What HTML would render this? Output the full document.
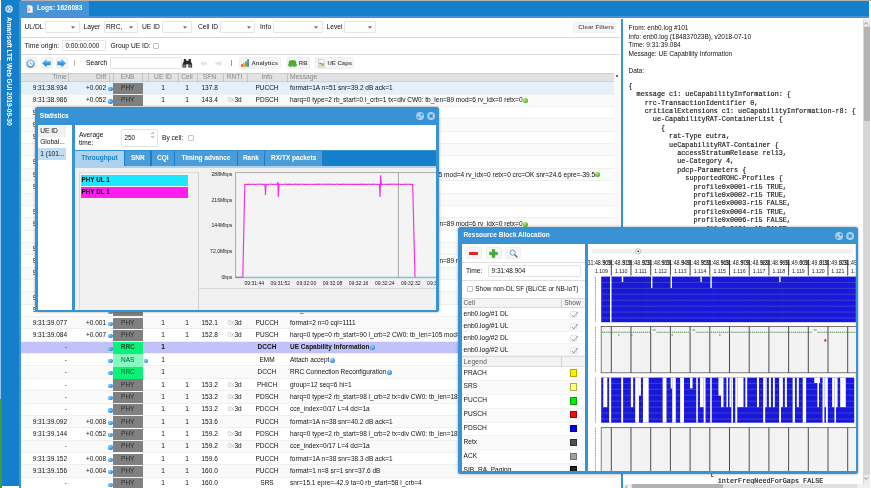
<!DOCTYPE html><html><head><meta charset="utf-8"><title>Amarisoft LTE Web GUI</title><style>
*{box-sizing:border-box;margin:0;padding:0}
html,body{width:871px;height:488px;overflow:hidden;background:#fff}
body{position:relative;font-family:"Liberation Sans",sans-serif;font-size:6.5px;color:#111;line-height:1}
.a{position:absolute}
.t{position:absolute;white-space:nowrap}
.b{font-weight:bold}
.sel{position:absolute;background:#fff;border:0.6px solid #e4e4e4;border-radius:1.2px}
.btn{position:absolute;background:#f5f5f5;border:0.5px solid #f0f0f0;border-radius:1.8px}
.row{position:absolute;left:21px;width:593px;height:12.33px;border-bottom:0.6px solid #f0f0f0}
.row .t{top:2.7px;font-size:6.5px}
.hd{position:absolute;top:0;height:100%;border-right:0.6px solid #c8c8c8}
.phy{position:absolute;left:92.4px;width:29.3px;top:0.5px;height:11.2px;background:#808080}
.rrc{position:absolute;left:92.4px;width:29.3px;top:0;height:12.4px;background:#0cf278}
.nas{position:absolute;left:92.4px;width:29.3px;top:0;height:12.4px;background:#84fbc0}
.ball{position:absolute;width:4.2px;height:4.2px;border-radius:50%;background:radial-gradient(circle at 35% 35%,#8fd0ff,#2a86d8 70%)}
.gr{display:inline-block;width:5px;height:5px;border-radius:50%;background:radial-gradient(circle at 40% 35%,#b8f080,#4caf20 70%);vertical-align:-0.8px;margin-left:0.3px}
.inf{display:inline-block;width:5px;height:5px;border-radius:50%;background:radial-gradient(circle at 40% 35%,#9fd4ff,#2a86d8 75%);vertical-align:-0.8px;margin-left:0.5px}
.win{position:absolute;background:#3892d4;border-radius:2.5px}
.mono{font-family:"Liberation Mono",monospace;white-space:pre;-webkit-text-stroke:0.18px #222}
.cb{position:absolute;width:6px;height:6px;border:0.6px solid #c4c4c4;background:#fff;border-radius:1px}
.rx{color:#c0c0c0}
</style></head><body><div id="app" style="position:absolute;left:0;top:0;width:871px;height:488px;overflow:hidden;will-change:transform">
<div class="a" style="left:19px;top:0;width:852px;height:1.3px;background:#b4b4b4"></div>
<div class="a" style="left:1.2px;top:0;width:20px;height:486px;background:#157fcc"></div>
<div class="a" style="left:18.5px;top:1.3px;width:2.5px;height:488px;background:#3e94d6"></div>
<div class="a" style="left:0;top:60px;width:1.4px;height:339px;background:#9cc6e8"></div>
<div class="a" style="left:0;top:399px;width:1.6px;height:89px;background:#3f9a3c"></div>
<div class="a" style="left:21px;top:1.3px;width:848px;height:14.4px;background:#157fcc"></div>
<div class="a" style="left:21px;top:15.5px;width:848px;height:2.8px;background:#4595d6"></div>
<div class="a" style="left:21px;top:1.3px;width:67.5px;height:15px;background:#4595d6"></div>
<svg class="a" style="left:27px;top:4.5px" width="6" height="8" viewBox="0 0 6 8"><path d="M0.3 0.3h3.6l1.8 1.8v5.6H0.3z" fill="#f4f4f4" stroke="#c9c9c9" stroke-width="0.5"/><path d="M1 3h1.6M1 4.3h2.4M1 5.6h2" stroke="#e08080" stroke-width="0.7"/></svg>
<div class="t b" style="left:37px;top:4.6px;font-size:6.6px;color:#fff">Logs: 1626083</div>
<svg class="a" style="left:5.2px;top:5px" width="8" height="8" viewBox="0 0 8 8"><circle cx="4" cy="4" r="3.1" fill="#5aa5dd" stroke="#d4e8f7" stroke-width="1.3"/><path d="M3.2 2.4L5 4 3.2 5.6" fill="none" stroke="#eaf4fb" stroke-width="1.1"/></svg>
<div class="t b" style="left:12.1px;top:17.2px;font-size:6.55px;color:#fff;transform-origin:0 0;transform:rotate(90deg)">Amarisoft LTE Web GUI 2019-09-30</div>
<div class="a" style="left:21px;top:36.6px;width:599px;height:0.7px;background:#d9d9d9"></div>
<div class="a" style="left:21px;top:54.2px;width:599px;height:0.7px;background:#d9d9d9"></div>
<div class="t" style="left:24.5px;top:24px;font-size:6.7px;">UL/DL</div>
<div class="sel" style="left:45px;top:21px;width:34.5px;height:12.2px"></div>
<svg class="a" style="left:71.3px;top:26.2px" width="4" height="3" viewBox="0 0 4 3"><path d="M0.2 0.5L2 2.5 3.8 0.5z" fill="#666" stroke="#666" stroke-width="0.3" stroke-linejoin="round"/></svg>
<div class="t" style="left:83.5px;top:24px;font-size:6.7px;">Layer</div>
<div class="sel" style="left:103.5px;top:21px;width:34px;height:12.2px"></div>
<div class="t" style="left:106.0px;top:24px;font-size:6.7px">RRC,</div>
<svg class="a" style="left:129.3px;top:26.2px" width="4" height="3" viewBox="0 0 4 3"><path d="M0.2 0.5L2 2.5 3.8 0.5z" fill="#666" stroke="#666" stroke-width="0.3" stroke-linejoin="round"/></svg>
<div class="t" style="left:142px;top:24px;font-size:6.7px;">UE ID</div>
<div class="sel" style="left:161.5px;top:21px;width:30px;height:12.2px"></div>
<svg class="a" style="left:183.3px;top:26.2px" width="4" height="3" viewBox="0 0 4 3"><path d="M0.2 0.5L2 2.5 3.8 0.5z" fill="#666" stroke="#666" stroke-width="0.3" stroke-linejoin="round"/></svg>
<div class="t" style="left:198px;top:24px;font-size:6.7px;">Cell ID</div>
<div class="sel" style="left:220px;top:21px;width:35px;height:12.2px"></div>
<svg class="a" style="left:246.8px;top:26.2px" width="4" height="3" viewBox="0 0 4 3"><path d="M0.2 0.5L2 2.5 3.8 0.5z" fill="#666" stroke="#666" stroke-width="0.3" stroke-linejoin="round"/></svg>
<div class="t" style="left:260px;top:24px;font-size:6.7px;">Info</div>
<div class="sel" style="left:273px;top:21px;width:49.5px;height:12.2px"></div>
<svg class="a" style="left:314.3px;top:26.2px" width="4" height="3" viewBox="0 0 4 3"><path d="M0.2 0.5L2 2.5 3.8 0.5z" fill="#666" stroke="#666" stroke-width="0.3" stroke-linejoin="round"/></svg>
<div class="t" style="left:326.5px;top:24px;font-size:6.7px;">Level</div>
<div class="sel" style="left:343.5px;top:21px;width:32.5px;height:12.2px"></div>
<svg class="a" style="left:367.8px;top:26.2px" width="4" height="3" viewBox="0 0 4 3"><path d="M0.2 0.5L2 2.5 3.8 0.5z" fill="#666" stroke="#666" stroke-width="0.3" stroke-linejoin="round"/></svg>
<div class="btn" style="left:573.3px;top:22px;width:43.2px;height:11px"></div>
<div class="t b" style="left:578.3px;top:24.4px;font-size:6.2px;color:#666">Clear Filters</div>
<div class="t" style="left:24.5px;top:42.6px;font-size:6.7px;">Time origin:</div>
<div class="sel" style="left:62px;top:39.8px;width:44.3px;height:11.4px"></div>
<div class="t" style="left:65.5px;top:42.8px;font-size:6.4px;">0:00:00.000</div>
<div class="t" style="left:110.5px;top:42.6px;font-size:6.7px;">Group UE ID:</div>
<div class="cb" style="left:152.7px;top:43px"></div>
<div class="btn" style="left:25px;top:57.3px;width:12px;height:12px;border-color:#f1eeec;background:#f6f5f4"></div>
<div class="btn" style="left:40.5px;top:57.3px;width:12px;height:12px;border-color:#f1eeec;background:#f6f5f4"></div>
<div class="btn" style="left:56px;top:57.3px;width:12px;height:12px;border-color:#f1eeec;background:#f6f5f4"></div>
<svg class="a" style="left:26.4px;top:58.7px" width="9.2" height="9.2" viewBox="0 0 10 10"><defs><linearGradient id="cg" x1="0" y1="0" x2="0" y2="1"><stop offset="0" stop-color="#9ad0f4"/><stop offset="1" stop-color="#2f8cd8"/></linearGradient></defs><circle cx="5" cy="5" r="3.8" fill="#f7fbff" stroke="url(#cg)" stroke-width="1.7"/><path d="M5.2 5.2L4.2 3.2M5.2 5.2l1.8 0.4" stroke="#e0703a" stroke-width="0.8" fill="none"/></svg>
<svg class="a" style="left:42.2px;top:59.2px" width="9" height="8.4" viewBox="0 0 9 8"><defs><linearGradient id="ag" x1="0" y1="0" x2="0" y2="1"><stop offset="0" stop-color="#7fd0ff"/><stop offset="0.5" stop-color="#2fa0ef"/><stop offset="1" stop-color="#1a78d0"/></linearGradient></defs><path d="M0.3 4L4.4 0.3v1.9h4.2v3.6H4.4v1.9z" fill="url(#ag)" stroke="#2a86d6" stroke-width="0.3"/></svg>
<svg class="a" style="left:57.4px;top:59.2px" width="9" height="8.4" viewBox="0 0 9 8"><path d="M8.7 4L4.6 0.3v1.9H0.4v3.6h4.2v1.9z" fill="url(#ag)" stroke="#2a86d6" stroke-width="0.3"/></svg>
<div class="a" style="left:74.3px;top:60.4px;width:1px;height:6px;background:#b4b4b4"></div>
<div class="t" style="left:86px;top:60px;font-size:6.7px;">Search</div>
<div class="sel" style="left:109.5px;top:57.3px;width:72px;height:12.2px"></div>
<svg class="a" style="left:182.2px;top:58.2px" width="10.6" height="10.4" viewBox="0 0 11 11"><path d="M1.8 1h2.4v2H6.8V1h2.4v2.4l1.4 3.2V10H6.6V6.6H4.4V10H0.4V6.6l1.4-3.2z" fill="#2a2a2a"/><rect x="1.2" y="7" width="2.4" height="2.2" fill="#8a8a8a"/><rect x="7.4" y="7" width="2.4" height="2.2" fill="#8a8a8a"/></svg>
<svg class="a" style="left:199.5px;top:60px" width="7.5" height="7" viewBox="0 0 9 8"><path d="M0.3 4L4.2 0.4v2.2h4.3v2.8H4.2v2.2z" fill="#d3e6f6"/></svg>
<svg class="a" style="left:214.5px;top:60px" width="7.5" height="7" viewBox="0 0 9 8"><path d="M8.7 4L4.8 0.4v2.2H0.5v2.8h4.3v2.2z" fill="#d3e6f6"/></svg>
<div class="a" style="left:231px;top:60.4px;width:1px;height:6px;background:#9a9a9a"></div>
<div class="btn" style="left:238.8px;top:57.3px;width:42px;height:12px"></div>
<svg class="a" style="left:241px;top:59.3px" width="8.4" height="8" viewBox="0 0 8.4 8"><rect x="0.2" y="5.2" width="1.7" height="2.6" fill="#e03c31"/><rect x="2.2" y="3.8" width="1.7" height="4" fill="#f0a020"/><rect x="4.2" y="2.2" width="1.7" height="5.6" fill="#58b030"/><rect x="6.2" y="0.3" width="1.7" height="7.5" fill="#3a78d0"/></svg>
<div class="t b" style="left:251.4px;top:60.2px;font-size:6px;color:#555">Analytics</div>
<div class="btn" style="left:285.8px;top:57.3px;width:24.4px;height:12px"></div>
<svg class="a" style="left:287.6px;top:60.2px" width="9" height="7" viewBox="0 0 9 7"><path d="M1 2.2Q1 0.4 2.8 0.4H6.2Q8 0.4 8 2.2V4.4H8.8V5.8H7V6.8H5.6V5.8H3.4V6.8H2V5.8H0.2V4.4H1z" fill="#4caf30" stroke="#2f8a1e" stroke-width="0.4"/></svg>
<div class="t b" style="left:298.8px;top:60.2px;font-size:6px;color:#555">RB</div>
<div class="btn" style="left:314.6px;top:57.3px;width:39px;height:12px"></div>
<svg class="a" style="left:317.5px;top:59px" width="7.2" height="8.6" viewBox="0 0 7.2 8.6"><path d="M0.4 0.4h4.2l2.2 2.2v5.6H0.4z" fill="#fafafa" stroke="#9ab4d0" stroke-width="0.6"/><rect x="1.4" y="3.6" width="1.6" height="1.4" fill="#4a90e0"/><rect x="3.4" y="4.2" width="2.2" height="2.6" fill="#60b840"/><rect x="1.4" y="5.6" width="1.4" height="1.4" fill="#f0a030"/></svg>
<div class="t b" style="left:327.5px;top:60.2px;font-size:6px;color:#555">UE Caps</div>
<div class="a" style="left:21px;top:72.6px;width:593px;height:9.7px;background:#e2e2e2;border-top:0.6px solid #cfcfcf;border-bottom:0.6px solid #cfcfcf"></div>
<div class="a" style="left:68px;top:73.2px;width:0.6px;height:8.6px;background:#c4c4c4"></div>
<div class="a" style="left:109px;top:73.2px;width:0.6px;height:8.6px;background:#c4c4c4"></div>
<div class="a" style="left:113px;top:73.2px;width:0.6px;height:8.6px;background:#c4c4c4"></div>
<div class="a" style="left:142.4px;top:73.2px;width:0.6px;height:8.6px;background:#c4c4c4"></div>
<div class="a" style="left:148px;top:73.2px;width:0.6px;height:8.6px;background:#c4c4c4"></div>
<div class="a" style="left:178px;top:73.2px;width:0.6px;height:8.6px;background:#c4c4c4"></div>
<div class="a" style="left:197px;top:73.2px;width:0.6px;height:8.6px;background:#c4c4c4"></div>
<div class="a" style="left:222.5px;top:73.2px;width:0.6px;height:8.6px;background:#c4c4c4"></div>
<div class="a" style="left:246.5px;top:73.2px;width:0.6px;height:8.6px;background:#c4c4c4"></div>
<div class="a" style="left:287px;top:73.2px;width:0.6px;height:8.6px;background:#c4c4c4"></div>
<div class="t" style="top:74.4px;font-size:6.7px;color:#888;right:804.2px">Time</div>
<div class="t" style="top:74.4px;font-size:6.7px;color:#888;right:765px">Diff</div>
<div class="t" style="top:74.4px;font-size:6.7px;color:#888;left:107.6px;width:40px;text-align:center">ENB</div>
<div class="t" style="top:74.4px;font-size:6.7px;color:#888;left:143px;width:40px;text-align:center">UE ID</div>
<div class="t" style="top:74.4px;font-size:6.7px;color:#888;left:167px;width:40px;text-align:center">Cell</div>
<div class="t" style="top:74.4px;font-size:6.7px;color:#888;left:189.5px;width:40px;text-align:center">SFN</div>
<div class="t" style="top:74.4px;font-size:6.7px;color:#888;left:214.5px;width:40px;text-align:center">RNTI</div>
<div class="t" style="top:74.4px;font-size:6.7px;color:#888;left:247px;width:40px;text-align:center">Info</div>
<div class="t" style="top:74.4px;font-size:6.7px;color:#888;left:290px">Message</div>
<div class="a" style="left:614px;top:72.6px;width:6.5px;height:416px;background:#fafafa"></div>
<div class="a" style="left:616.2px;top:75px;width:1.6px;height:1.6px;border-radius:50%;background:#555"></div>
<div class="a" style="left:21px;top:82px;width:593px;height:406px;overflow:hidden">
<div class="row" style="left:0;top:0.35px;background:#e4f0fa">
<div class="t" style="right:547px">9:31:38.934</div>
<div class="t" style="right:508px">+0.002</div>
<div class="ball" style="left:87.4px;top:4.8px"></div>
<div class="phy"></div>
<div class="t" style="left:92px;width:29.5px;text-align:center;color:#2a2a2a">PHY</div>
<div class="t" style="left:132px;width:20px;text-align:center">1</div>
<div class="t" style="left:156px;width:20px;text-align:center">1</div>
<div class="t" style="left:180.5px">137.8</div>
<div class="t" style="left:226px;width:40px;text-align:center">PUCCH</div>
<div class="t" style="left:269px">format=1A n=51 snr=39.2 dB ack=1</div>
</div>
<div class="row" style="left:0;top:12.70px;background:#fafafa">
<div class="t" style="right:547px">9:31:38.986</div>
<div class="t" style="right:508px">+0.052</div>
<div class="ball" style="left:87.4px;top:4.8px"></div>
<div class="phy"></div>
<div class="t" style="left:92px;width:29.5px;text-align:center;color:#2a2a2a">PHY</div>
<div class="t" style="left:132px;width:20px;text-align:center">1</div>
<div class="t" style="left:156px;width:20px;text-align:center">1</div>
<div class="t" style="left:180.5px">143.4</div>
<div class="t" style="left:206.5px"><span class="rx">0x</span>3d</div>
<div class="t" style="left:226px;width:40px;text-align:center">PDSCH</div>
<div class="t" style="left:269px">harq=0 type=2 rb_start=0 l_crb=1 tx=div CW0: tb_len=89 mod=6 rv_idx=0 retx=0<span class="gr"></span></div>
</div>
<div class="row" style="left:0;top:25.06px;background:#fff">
<div class="t" style="right:547px">9:31:38.986</div>
<div class="ball" style="left:87.4px;top:4.8px"></div>
<div class="phy"></div>
<div class="t" style="left:92px;width:29.5px;text-align:center;color:#2a2a2a">PHY</div>
<div class="t" style="left:132px;width:20px;text-align:center">1</div>
<div class="t" style="left:156px;width:20px;text-align:center">1</div>
<div class="t" style="left:180.5px">143.4</div>
<div class="t" style="left:206.5px"><span class="rx">0x</span>3d</div>
<div class="t" style="left:226px;width:40px;text-align:center">PDCCH</div>
<div class="t" style="left:269px">cce_index=0/17 L=4 dci=1a</div>
</div>
<div class="row" style="left:0;top:37.41px;background:#fafafa">
<div class="t" style="right:547px">9:31:38.990</div>
<div class="t" style="right:508px">+0.004</div>
<div class="ball" style="left:87.4px;top:4.8px"></div>
<div class="phy"></div>
<div class="t" style="left:92px;width:29.5px;text-align:center;color:#2a2a2a">PHY</div>
<div class="t" style="left:132px;width:20px;text-align:center">1</div>
<div class="t" style="left:156px;width:20px;text-align:center">1</div>
<div class="t" style="left:180.5px">143.8</div>
<div class="t" style="left:226px;width:40px;text-align:center">PUCCH</div>
<div class="t" style="left:269px">format=1A n=38 snr=39.6 dB ack=1</div>
</div>
<div class="row" style="left:0;top:49.77px;background:#fff">
<div class="t" style="right:547px">9:31:38.994</div>
<div class="t" style="right:508px">+0.004</div>
<div class="ball" style="left:87.4px;top:4.8px"></div>
<div class="phy"></div>
<div class="t" style="left:92px;width:29.5px;text-align:center;color:#2a2a2a">PHY</div>
<div class="t" style="left:132px;width:20px;text-align:center">1</div>
<div class="t" style="left:156px;width:20px;text-align:center">1</div>
<div class="t" style="left:180.5px">144.2</div>
<div class="t" style="left:206.5px"><span class="rx">0x</span>3d</div>
<div class="t" style="left:226px;width:40px;text-align:center">PUSCH</div>
<div class="t" style="left:269px">harq=0 type=0 rb_start=90 l_crb=2</div>
</div>
<div class="row" style="left:0;top:62.12px;background:#fafafa">
<div class="t" style="right:547.2px">-</div>
<div class="ball" style="left:87.4px;top:4.8px"></div>
<div class="phy"></div>
<div class="t" style="left:92px;width:29.5px;text-align:center;color:#2a2a2a">PHY</div>
<div class="t" style="left:132px;width:20px;text-align:center">1</div>
<div class="t" style="left:156px;width:20px;text-align:center">1</div>
<div class="t" style="left:180.5px">144.8</div>
<div class="t" style="left:206.5px"><span class="rx">0x</span>3d</div>
<div class="t" style="left:226px;width:40px;text-align:center">PHICH</div>
<div class="t" style="left:269px">group=12 seq=6 hi=1</div>
</div>
<div class="row" style="left:0;top:74.48px;background:#fff">
<div class="t" style="right:547px">9:31:39.004</div>
<div class="t" style="right:508px">+0.010</div>
<div class="ball" style="left:87.4px;top:4.8px"></div>
<div class="phy"></div>
<div class="t" style="left:92px;width:29.5px;text-align:center;color:#2a2a2a">PHY</div>
<div class="t" style="left:132px;width:20px;text-align:center">1</div>
<div class="t" style="left:156px;width:20px;text-align:center">1</div>
<div class="t" style="left:180.5px">145.2</div>
<div class="t" style="left:206.5px"><span class="rx">0x</span>3d</div>
<div class="t" style="left:226px;width:40px;text-align:center">PDCCH</div>
<div class="t" style="left:269px">cce_index=0/17 L=4 dci=0</div>
</div>
<div class="row" style="left:0;top:86.83px;background:#fafafa">
<div class="t" style="right:547px">9:31:39.024</div>
<div class="t" style="right:508px">+0.020</div>
<div class="ball" style="left:87.4px;top:4.8px"></div>
<div class="phy"></div>
<div class="t" style="left:92px;width:29.5px;text-align:center;color:#2a2a2a">PHY</div>
<div class="t" style="left:132px;width:20px;text-align:center">1</div>
<div class="t" style="left:156px;width:20px;text-align:center">1</div>
<div class="t" style="left:180.5px">147.2</div>
<div class="t" style="left:206.5px"><span class="rx">0x</span>3d</div>
<div class="t" style="left:226px;width:40px;text-align:center">PUSCH</div>
<div class="t" style="left:269px">harq=0 type=0 rb_start=90 l_crb=2 CW0: tb_len=185 mod=4 rv_idx=0 retx=0 crc=OK snr=24.6 epre=-39.5<span class="gr"></span></div>
</div>
<div class="row" style="left:0;top:99.19px;background:#fff">
<div class="t" style="right:547px">9:31:39.034</div>
<div class="t" style="right:508px">+0.010</div>
<div class="ball" style="left:87.4px;top:4.8px"></div>
<div class="phy"></div>
<div class="t" style="left:92px;width:29.5px;text-align:center;color:#2a2a2a">PHY</div>
<div class="t" style="left:132px;width:20px;text-align:center">1</div>
<div class="t" style="left:156px;width:20px;text-align:center">1</div>
<div class="t" style="left:180.5px">148.8</div>
<div class="t" style="left:206.5px"><span class="rx">0x</span>3d</div>
<div class="t" style="left:226px;width:40px;text-align:center">PUCCH</div>
<div class="t" style="left:269px">format=2 n=0 cqi=1111</div>
</div>
<div class="row" style="left:0;top:111.55px;background:#fafafa">
<div class="t" style="right:547.2px">-</div>
<div class="ball" style="left:87.4px;top:4.8px"></div>
<div class="phy"></div>
<div class="t" style="left:92px;width:29.5px;text-align:center;color:#2a2a2a">PHY</div>
<div class="t" style="left:132px;width:20px;text-align:center">1</div>
<div class="t" style="left:156px;width:20px;text-align:center">1</div>
<div class="t" style="left:180.5px">149.2</div>
<div class="t" style="left:206.5px"><span class="rx">0x</span>3d</div>
<div class="t" style="left:226px;width:40px;text-align:center">PHICH</div>
<div class="t" style="left:269px">group=12 seq=6 hi=1</div>
</div>
<div class="row" style="left:0;top:123.90px;background:#fff">
<div class="t" style="right:547px">9:31:39.044</div>
<div class="t" style="right:508px">+0.010</div>
<div class="ball" style="left:87.4px;top:4.8px"></div>
<div class="phy"></div>
<div class="t" style="left:92px;width:29.5px;text-align:center;color:#2a2a2a">PHY</div>
<div class="t" style="left:132px;width:20px;text-align:center">1</div>
<div class="t" style="left:156px;width:20px;text-align:center">1</div>
<div class="t" style="left:180.5px">149.6</div>
<div class="t" style="left:226px;width:40px;text-align:center">PUCCH</div>
<div class="t" style="left:269px">format=1 n=8 sr=1 snr=37.2 dB</div>
</div>
<div class="row" style="left:0;top:136.25px;background:#fafafa">
<div class="t" style="right:547px">9:31:39.050</div>
<div class="t" style="right:508px">+0.006</div>
<div class="ball" style="left:87.4px;top:4.8px"></div>
<div class="phy"></div>
<div class="t" style="left:92px;width:29.5px;text-align:center;color:#2a2a2a">PHY</div>
<div class="t" style="left:132px;width:20px;text-align:center">1</div>
<div class="t" style="left:156px;width:20px;text-align:center">1</div>
<div class="t" style="left:180.5px">150.2</div>
<div class="t" style="left:206.5px"><span class="rx">0x</span>3d</div>
<div class="t" style="left:226px;width:40px;text-align:center">PDSCH</div>
<div class="t" style="left:269px">harq=0 type=2 rb_start=0 l_crb=1 tx=div CW0: tb_len=89 mod=6 rv_idx=0 retx=0<span class="gr"></span></div>
</div>
<div class="row" style="left:0;top:148.61px;background:#fff">
<div class="t" style="right:547.2px">-</div>
<div class="ball" style="left:87.4px;top:4.8px"></div>
<div class="phy"></div>
<div class="t" style="left:92px;width:29.5px;text-align:center;color:#2a2a2a">PHY</div>
<div class="t" style="left:132px;width:20px;text-align:center">1</div>
<div class="t" style="left:156px;width:20px;text-align:center">1</div>
<div class="t" style="left:180.5px">150.2</div>
<div class="t" style="left:206.5px"><span class="rx">0x</span>3d</div>
<div class="t" style="left:226px;width:40px;text-align:center">PDCCH</div>
<div class="t" style="left:269px">cce_index=0/17 L=4 dci=1a</div>
</div>
<div class="row" style="left:0;top:160.97px;background:#fafafa">
<div class="t" style="right:547px">9:31:39.054</div>
<div class="t" style="right:508px">+0.004</div>
<div class="ball" style="left:87.4px;top:4.8px"></div>
<div class="phy"></div>
<div class="t" style="left:92px;width:29.5px;text-align:center;color:#2a2a2a">PHY</div>
<div class="t" style="left:132px;width:20px;text-align:center">1</div>
<div class="t" style="left:156px;width:20px;text-align:center">1</div>
<div class="t" style="left:180.5px">150.6</div>
<div class="t" style="left:226px;width:40px;text-align:center">PUCCH</div>
<div class="t" style="left:269px">format=1A n=38 snr=39.9 dB ack=1</div>
</div>
<div class="row" style="left:0;top:173.32px;background:#fff">
<div class="t" style="right:547px">9:31:39.060</div>
<div class="t" style="right:508px">+0.006</div>
<div class="ball" style="left:87.4px;top:4.8px"></div>
<div class="phy"></div>
<div class="t" style="left:92px;width:29.5px;text-align:center;color:#2a2a2a">PHY</div>
<div class="t" style="left:132px;width:20px;text-align:center">1</div>
<div class="t" style="left:156px;width:20px;text-align:center">1</div>
<div class="t" style="left:180.5px">151.2</div>
<div class="t" style="left:206.5px"><span class="rx">0x</span>3d</div>
<div class="t" style="left:226px;width:40px;text-align:center">PDSCH</div>
<div class="t" style="left:269px">harq=0 type=2 rb_start=0 l_crb=1 tx=div CW0: tb_len=89 mod=6 rv_idx=0 retx=0<span class="gr"></span></div>
</div>
<div class="row" style="left:0;top:185.68px;background:#fafafa">
<div class="t" style="right:547px">9:31:39.064</div>
<div class="t" style="right:508px">+0.004</div>
<div class="ball" style="left:87.4px;top:4.8px"></div>
<div class="phy"></div>
<div class="t" style="left:92px;width:29.5px;text-align:center;color:#2a2a2a">PHY</div>
<div class="t" style="left:132px;width:20px;text-align:center">1</div>
<div class="t" style="left:156px;width:20px;text-align:center">1</div>
<div class="t" style="left:180.5px">151.6</div>
<div class="t" style="left:206.5px"><span class="rx">0x</span>3d</div>
<div class="t" style="left:226px;width:40px;text-align:center">PDCCH</div>
<div class="t" style="left:269px">cce_index=0/17 L=4 dci=1a</div>
</div>
<div class="row" style="left:0;top:198.03px;background:#fff">
<div class="t" style="right:547.2px">-</div>
<div class="ball" style="left:87.4px;top:4.8px"></div>
<div class="phy"></div>
<div class="t" style="left:92px;width:29.5px;text-align:center;color:#2a2a2a">PHY</div>
<div class="t" style="left:132px;width:20px;text-align:center">1</div>
<div class="t" style="left:156px;width:20px;text-align:center">1</div>
<div class="t" style="left:180.5px">151.6</div>
<div class="t" style="left:206.5px"><span class="rx">0x</span>3d</div>
<div class="t" style="left:226px;width:40px;text-align:center">PHICH</div>
<div class="t" style="left:269px">group=12 seq=6 hi=1</div>
</div>
<div class="row" style="left:0;top:210.38px;background:#fafafa">
<div class="t" style="right:547px">9:31:39.070</div>
<div class="t" style="right:508px">+0.006</div>
<div class="ball" style="left:87.4px;top:4.8px"></div>
<div class="phy"></div>
<div class="t" style="left:92px;width:29.5px;text-align:center;color:#2a2a2a">PHY</div>
<div class="t" style="left:132px;width:20px;text-align:center">1</div>
<div class="t" style="left:156px;width:20px;text-align:center">1</div>
<div class="t" style="left:180.5px">152.0</div>
<div class="t" style="left:206.5px"><span class="rx">0x</span>3d</div>
<div class="t" style="left:226px;width:40px;text-align:center">PDCCH</div>
<div class="t" style="left:269px">cce_index=0/17 L=4 dci=0</div>
</div>
<div class="row" style="left:0;top:222.74px;background:#fff">
<div class="t" style="right:547px">9:31:39.076</div>
<div class="t" style="right:508px">+0.006</div>
<div class="ball" style="left:87.4px;top:4.8px"></div>
<div class="phy"></div>
<div class="t" style="left:92px;width:29.5px;text-align:center;color:#2a2a2a">PHY</div>
<div class="t" style="left:132px;width:20px;text-align:center">1</div>
<div class="t" style="left:156px;width:20px;text-align:center">1</div>
<div class="t" style="left:180.5px">152.0</div>
<div class="t" style="left:206.5px"><span class="rx">0x</span>3d</div>
<div class="t" style="left:226px;width:40px;text-align:center">PDCCH</div>
<div class="t" style="left:269px">cce_index=2/17 L=4 dci=0</div>
</div>
<div class="row" style="left:0;top:235.10px;background:#fafafa">
<div class="t" style="right:547px">9:31:39.077</div>
<div class="t" style="right:508px">+0.001</div>
<div class="ball" style="left:87.4px;top:4.8px"></div>
<div class="phy"></div>
<div class="t" style="left:92px;width:29.5px;text-align:center;color:#2a2a2a">PHY</div>
<div class="t" style="left:132px;width:20px;text-align:center">1</div>
<div class="t" style="left:156px;width:20px;text-align:center">1</div>
<div class="t" style="left:180.5px">152.1</div>
<div class="t" style="left:206.5px"><span class="rx">0x</span>3d</div>
<div class="t" style="left:226px;width:40px;text-align:center">PUCCH</div>
<div class="t" style="left:269px">format=2 n=0 cqi=1111</div>
</div>
<div class="row" style="left:0;top:247.45px;background:#fff">
<div class="t" style="right:547px">9:31:39.084</div>
<div class="t" style="right:508px">+0.007</div>
<div class="ball" style="left:87.4px;top:4.8px"></div>
<div class="phy"></div>
<div class="t" style="left:92px;width:29.5px;text-align:center;color:#2a2a2a">PHY</div>
<div class="t" style="left:132px;width:20px;text-align:center">1</div>
<div class="t" style="left:156px;width:20px;text-align:center">1</div>
<div class="t" style="left:180.5px">152.8</div>
<div class="t" style="left:206.5px"><span class="rx">0x</span>3d</div>
<div class="t" style="left:226px;width:40px;text-align:center">PUSCH</div>
<div class="t" style="left:269px">harq=0 type=0 rb_start=90 l_crb=2 CW0: tb_len=105 mod=4 rv_idx=0 retx=0 crc=OK</div>
</div>
<div class="row" style="left:0;top:259.80px;background:#c2c2fb">
<div class="t" style="right:547.2px">-</div>
<div class="ball" style="left:87.4px;top:4.8px"></div>
<div class="rrc"></div>
<div class="t b" style="left:92px;width:29.5px;text-align:center;color:#0a5a30">RRC</div>
<div class="t b" style="left:132px;width:20px;text-align:center">1</div>
<div class="t b" style="left:226px;width:40px;text-align:center">DCCH</div>
<div class="t b" style="left:269px">UE Capability Information<span class="inf"></span></div>
</div>
<div class="row" style="left:0;top:272.16px;background:#fff">
<div class="t" style="right:547.2px">-</div>
<div class="ball" style="left:87.4px;top:4.8px"></div>
<div class="nas"></div>
<div class="t" style="left:92px;width:29.5px;text-align:center;color:#0a5a30">NAS</div>
<div class="ball" style="left:123.4px;top:4.6px;width:4px;height:4px"></div>
<div class="t" style="left:132px;width:20px;text-align:center">1</div>
<div class="t" style="left:226px;width:40px;text-align:center">EMM</div>
<div class="t" style="left:269px">Attach accept<span class="inf"></span></div>
</div>
<div class="row" style="left:0;top:284.51px;background:#fafafa">
<div class="t" style="right:547.2px">-</div>
<div class="ball" style="left:87.4px;top:4.8px"></div>
<div class="rrc"></div>
<div class="t" style="left:92px;width:29.5px;text-align:center;color:#0a5a30">RRC</div>
<div class="t" style="left:132px;width:20px;text-align:center">1</div>
<div class="t" style="left:226px;width:40px;text-align:center">DCCH</div>
<div class="t" style="left:269px">RRC Connection Reconfiguration<span class="inf"></span></div>
</div>
<div class="row" style="left:0;top:296.87px;background:#fff">
<div class="t" style="right:547.2px">-</div>
<div class="ball" style="left:87.4px;top:4.8px"></div>
<div class="phy"></div>
<div class="t" style="left:92px;width:29.5px;text-align:center;color:#2a2a2a">PHY</div>
<div class="t" style="left:132px;width:20px;text-align:center">1</div>
<div class="t" style="left:156px;width:20px;text-align:center">1</div>
<div class="t" style="left:180.5px">153.2</div>
<div class="t" style="left:206.5px"><span class="rx">0x</span>3d</div>
<div class="t" style="left:226px;width:40px;text-align:center">PHICH</div>
<div class="t" style="left:269px">group=12 seq=6 hi=1</div>
</div>
<div class="row" style="left:0;top:309.23px;background:#fafafa">
<div class="t" style="right:547.2px">-</div>
<div class="ball" style="left:87.4px;top:4.8px"></div>
<div class="phy"></div>
<div class="t" style="left:92px;width:29.5px;text-align:center;color:#2a2a2a">PHY</div>
<div class="t" style="left:132px;width:20px;text-align:center">1</div>
<div class="t" style="left:156px;width:20px;text-align:center">1</div>
<div class="t" style="left:180.5px">153.2</div>
<div class="t" style="left:206.5px"><span class="rx">0x</span>3d</div>
<div class="t" style="left:226px;width:40px;text-align:center">PDSCH</div>
<div class="t" style="left:269px">harq=0 type=2 rb_start=98 l_crb=2 tx=div CW0: tb_len=185 mod=6 rv_idx=0 retx=0</div>
</div>
<div class="row" style="left:0;top:321.58px;background:#fff">
<div class="t" style="right:547.2px">-</div>
<div class="ball" style="left:87.4px;top:4.8px"></div>
<div class="phy"></div>
<div class="t" style="left:92px;width:29.5px;text-align:center;color:#2a2a2a">PHY</div>
<div class="t" style="left:132px;width:20px;text-align:center">1</div>
<div class="t" style="left:156px;width:20px;text-align:center">1</div>
<div class="t" style="left:180.5px">153.2</div>
<div class="t" style="left:206.5px"><span class="rx">0x</span>3d</div>
<div class="t" style="left:226px;width:40px;text-align:center">PDCCH</div>
<div class="t" style="left:269px">cce_index=0/17 L=4 dci=1a</div>
</div>
<div class="row" style="left:0;top:333.94px;background:#fafafa">
<div class="t" style="right:547px">9:31:39.092</div>
<div class="t" style="right:508px">+0.008</div>
<div class="ball" style="left:87.4px;top:4.8px"></div>
<div class="phy"></div>
<div class="t" style="left:92px;width:29.5px;text-align:center;color:#2a2a2a">PHY</div>
<div class="t" style="left:132px;width:20px;text-align:center">1</div>
<div class="t" style="left:156px;width:20px;text-align:center">1</div>
<div class="t" style="left:180.5px">153.6</div>
<div class="t" style="left:226px;width:40px;text-align:center">PUCCH</div>
<div class="t" style="left:269px">format=1A n=38 snr=40.2 dB ack=1</div>
</div>
<div class="row" style="left:0;top:346.29px;background:#fff">
<div class="t" style="right:547px">9:31:39.144</div>
<div class="t" style="right:508px">+0.052</div>
<div class="ball" style="left:87.4px;top:4.8px"></div>
<div class="phy"></div>
<div class="t" style="left:92px;width:29.5px;text-align:center;color:#2a2a2a">PHY</div>
<div class="t" style="left:132px;width:20px;text-align:center">1</div>
<div class="t" style="left:156px;width:20px;text-align:center">1</div>
<div class="t" style="left:180.5px">159.2</div>
<div class="t" style="left:206.5px"><span class="rx">0x</span>3d</div>
<div class="t" style="left:226px;width:40px;text-align:center">PDSCH</div>
<div class="t" style="left:269px">harq=0 type=2 rb_start=98 l_crb=2 tx=div CW0: tb_len=185 mod=6 rv_idx=0 retx=0</div>
</div>
<div class="row" style="left:0;top:358.64px;background:#fafafa">
<div class="t" style="right:547.2px">-</div>
<div class="ball" style="left:87.4px;top:4.8px"></div>
<div class="phy"></div>
<div class="t" style="left:92px;width:29.5px;text-align:center;color:#2a2a2a">PHY</div>
<div class="t" style="left:132px;width:20px;text-align:center">1</div>
<div class="t" style="left:156px;width:20px;text-align:center">1</div>
<div class="t" style="left:180.5px">159.2</div>
<div class="t" style="left:206.5px"><span class="rx">0x</span>3d</div>
<div class="t" style="left:226px;width:40px;text-align:center">PDCCH</div>
<div class="t" style="left:269px">cce_index=0/17 L=4 dci=1a</div>
</div>
<div class="row" style="left:0;top:371.00px;background:#fff">
<div class="t" style="right:547px">9:31:39.152</div>
<div class="t" style="right:508px">+0.008</div>
<div class="ball" style="left:87.4px;top:4.8px"></div>
<div class="phy"></div>
<div class="t" style="left:92px;width:29.5px;text-align:center;color:#2a2a2a">PHY</div>
<div class="t" style="left:132px;width:20px;text-align:center">1</div>
<div class="t" style="left:156px;width:20px;text-align:center">1</div>
<div class="t" style="left:180.5px">159.6</div>
<div class="t" style="left:226px;width:40px;text-align:center">PUCCH</div>
<div class="t" style="left:269px">format=1A n=38 snr=38.3 dB ack=1</div>
</div>
<div class="row" style="left:0;top:383.36px;background:#fafafa">
<div class="t" style="right:547px">9:31:39.156</div>
<div class="t" style="right:508px">+0.004</div>
<div class="ball" style="left:87.4px;top:4.8px"></div>
<div class="phy"></div>
<div class="t" style="left:92px;width:29.5px;text-align:center;color:#2a2a2a">PHY</div>
<div class="t" style="left:132px;width:20px;text-align:center">1</div>
<div class="t" style="left:156px;width:20px;text-align:center">1</div>
<div class="t" style="left:180.5px">160.0</div>
<div class="t" style="left:226px;width:40px;text-align:center">PUCCH</div>
<div class="t" style="left:269px">format=1 n=8 sr=1 snr=37.6 dB</div>
</div>
<div class="row" style="left:0;top:395.71px;background:#fff">
<div class="t" style="right:547.2px">-</div>
<div class="ball" style="left:87.4px;top:4.8px"></div>
<div class="phy"></div>
<div class="t" style="left:92px;width:29.5px;text-align:center;color:#2a2a2a">PHY</div>
<div class="t" style="left:132px;width:20px;text-align:center">1</div>
<div class="t" style="left:156px;width:20px;text-align:center">1</div>
<div class="t" style="left:180.5px">160.0</div>
<div class="t" style="left:226px;width:40px;text-align:center">SRS</div>
<div class="t" style="left:269px">snr=15.1 epre=-42.9 ta=0 rb_start=58 l_crb=4</div>
</div>
</div>
<div class="a" style="left:620.5px;top:18.5px;width:2.2px;height:470px;background:#3892d4"></div>
<div class="a" style="left:622.7px;top:18.5px;width:240px;height:470px;background:#fff"></div>
<div class="a" style="left:862.6px;top:18.5px;width:0.6px;height:470px;background:#d8d8d8"></div>
<div class="a" style="left:864px;top:18.5px;width:6px;height:466px;background:#d6d6d6"></div>
<div class="a" style="left:864px;top:18.5px;width:6px;height:7.5px;background:#ececec"></div>
<div class="a" style="left:864px;top:475px;width:6px;height:9px;background:#ececec"></div>
<div class="a" style="left:864px;top:26.5px;width:6px;height:94px;background:#b4b4b4;border-radius:1px"></div>
<svg class="a" style="left:864.4px;top:21.5px" width="4.4" height="3" viewBox="0 0 4.4 3"><path d="M0.3 2.6L2.2 0.5 4.1 2.6" fill="none" stroke="#777" stroke-width="0.8"/></svg>
<svg class="a" style="left:864.4px;top:477px" width="4.4" height="3" viewBox="0 0 4.4 3"><path d="M0.3 0.4L2.2 2.5 4.1 0.4" fill="none" stroke="#777" stroke-width="0.8"/></svg>
<div class="a" style="left:622.7px;top:483.8px;width:247.3px;height:4.2px;background:#e0e0e0"></div>
<div class="a" style="left:622.7px;top:483.8px;width:8px;height:4.2px;background:#f0f0f0"></div>
<div class="a" style="left:857px;top:483.8px;width:13px;height:4.2px;background:#f0f0f0"></div>
<svg class="a" style="left:625.4px;top:484.6px" width="3" height="3.4" viewBox="0 0 3 3.4"><path d="M2.4 0.2L0.6 1.9 2.4 3.6" fill="none" stroke="#666" stroke-width="0.7"/></svg>
<div class="a" style="left:632px;top:484.4px;width:91px;height:3.6px;background:#b2b2b2;border-radius:1.5px 1.5px 0 0"></div>
<div class="a" style="left:622.7px;top:18.5px;width:240px;height:465.5px;overflow:hidden">
<div class="t" style="left:5.8px;top:6.70px;font-size:6.5px">From: enb0.log #101</div>
<div class="t" style="left:5.8px;top:15.30px;font-size:6.5px">Info: enb0.log (184837023B), v2018-07-10</div>
<div class="t" style="left:5.8px;top:23.90px;font-size:6.5px">Time: 9:31:39.084</div>
<div class="t" style="left:5.8px;top:32.50px;font-size:6.5px">Message: UE Capability Information</div>
<div class="t" style="left:5.8px;top:49.70px;font-size:6.5px">Data:</div>
<pre class="t mono" style="left:5.8px;top:64.20px;font-size:6.78px;color:#1a1a1a">{</pre>
<pre class="t mono" style="left:5.8px;top:72.61px;font-size:6.78px;color:#1a1a1a">  message c1: ueCapabilityInformation: {</pre>
<pre class="t mono" style="left:5.8px;top:81.02px;font-size:6.78px;color:#1a1a1a">    rrc-TransactionIdentifier 0,</pre>
<pre class="t mono" style="left:5.8px;top:89.43px;font-size:6.78px;color:#1a1a1a">    criticalExtensions c1: ueCapabilityInformation-r8: {</pre>
<pre class="t mono" style="left:5.8px;top:97.84px;font-size:6.78px;color:#1a1a1a">      ue-CapabilityRAT-ContainerList {</pre>
<pre class="t mono" style="left:5.8px;top:106.25px;font-size:6.78px;color:#1a1a1a">        {</pre>
<pre class="t mono" style="left:5.8px;top:114.66px;font-size:6.78px;color:#1a1a1a">          rat-Type eutra,</pre>
<pre class="t mono" style="left:5.8px;top:123.07px;font-size:6.78px;color:#1a1a1a">          ueCapabilityRAT-Container {</pre>
<pre class="t mono" style="left:5.8px;top:131.48px;font-size:6.78px;color:#1a1a1a">            accessStratumRelease rel13,</pre>
<pre class="t mono" style="left:5.8px;top:139.89px;font-size:6.78px;color:#1a1a1a">            ue-Category 4,</pre>
<pre class="t mono" style="left:5.8px;top:148.30px;font-size:6.78px;color:#1a1a1a">            pdcp-Parameters {</pre>
<pre class="t mono" style="left:5.8px;top:156.71px;font-size:6.78px;color:#1a1a1a">              supportedROHC-Profiles {</pre>
<pre class="t mono" style="left:5.8px;top:165.12px;font-size:6.78px;color:#1a1a1a">                profile0x0001-r15 TRUE,</pre>
<pre class="t mono" style="left:5.8px;top:173.53px;font-size:6.78px;color:#1a1a1a">                profile0x0002-r15 TRUE,</pre>
<pre class="t mono" style="left:5.8px;top:181.94px;font-size:6.78px;color:#1a1a1a">                profile0x0003-r15 FALSE,</pre>
<pre class="t mono" style="left:5.8px;top:190.35px;font-size:6.78px;color:#1a1a1a">                profile0x0004-r15 TRUE,</pre>
<pre class="t mono" style="left:5.8px;top:198.76px;font-size:6.78px;color:#1a1a1a">                profile0x0006-r15 FALSE,</pre>
<pre class="t mono" style="left:5.8px;top:207.17px;font-size:6.78px;color:#1a1a1a">                profile0x0101-r15 FALSE,</pre>
<pre class="t mono" style="left:5.8px;top:215.58px;font-size:6.78px;color:#1a1a1a">                profile0x0102-r15 FALSE,</pre>
<pre class="t mono" style="left:5.8px;top:223.99px;font-size:6.78px;color:#1a1a1a">                profile0x0104-r15 FALSE</pre>
<pre class="t mono" style="left:5.8px;top:232.40px;font-size:6.78px;color:#1a1a1a">              }</pre>
<pre class="t mono" style="left:5.8px;top:240.81px;font-size:6.78px;color:#1a1a1a">            },</pre>
<pre class="t mono" style="left:5.8px;top:249.22px;font-size:6.78px;color:#1a1a1a">            phyLayerParameters {</pre>
<pre class="t mono" style="left:5.8px;top:257.63px;font-size:6.78px;color:#1a1a1a">              ue-TxAntennaSelectionSupported FALSE,</pre>
<pre class="t mono" style="left:5.8px;top:266.04px;font-size:6.78px;color:#1a1a1a">              ue-SpecificRefSigsSupported FALSE</pre>
<pre class="t mono" style="left:5.8px;top:274.45px;font-size:6.78px;color:#1a1a1a">            },</pre>
<pre class="t mono" style="left:5.8px;top:282.86px;font-size:6.78px;color:#1a1a1a">            rf-Parameters {</pre>
<pre class="t mono" style="left:5.8px;top:291.27px;font-size:6.78px;color:#1a1a1a">              supportedBandListEUTRA {</pre>
<pre class="t mono" style="left:5.8px;top:299.68px;font-size:6.78px;color:#1a1a1a">                {</pre>
<pre class="t mono" style="left:5.8px;top:308.09px;font-size:6.78px;color:#1a1a1a">                  bandEUTRA 1,</pre>
<pre class="t mono" style="left:5.8px;top:316.50px;font-size:6.78px;color:#1a1a1a">                  halfDuplex FALSE</pre>
<pre class="t mono" style="left:5.8px;top:324.91px;font-size:6.78px;color:#1a1a1a">                },</pre>
<pre class="t mono" style="left:5.8px;top:333.32px;font-size:6.78px;color:#1a1a1a">                {</pre>
<pre class="t mono" style="left:5.8px;top:341.73px;font-size:6.78px;color:#1a1a1a">                  bandEUTRA 3,</pre>
<pre class="t mono" style="left:5.8px;top:350.14px;font-size:6.78px;color:#1a1a1a">                  halfDuplex FALSE</pre>
<pre class="t mono" style="left:5.8px;top:358.55px;font-size:6.78px;color:#1a1a1a">                },</pre>
<pre class="t mono" style="left:5.8px;top:366.96px;font-size:6.78px;color:#1a1a1a">                {</pre>
<pre class="t mono" style="left:5.8px;top:375.37px;font-size:6.78px;color:#1a1a1a">                  bandEUTRA 7,</pre>
<pre class="t mono" style="left:5.8px;top:383.78px;font-size:6.78px;color:#1a1a1a">                  halfDuplex FALSE</pre>
<pre class="t mono" style="left:5.8px;top:392.19px;font-size:6.78px;color:#1a1a1a">                }</pre>
<pre class="t mono" style="left:5.8px;top:400.60px;font-size:6.78px;color:#1a1a1a">              }</pre>
<pre class="t mono" style="left:5.8px;top:409.01px;font-size:6.78px;color:#1a1a1a">            },</pre>
<pre class="t mono" style="left:5.8px;top:417.42px;font-size:6.78px;color:#1a1a1a">            measParameters {</pre>
<pre class="t mono" style="left:5.8px;top:425.83px;font-size:6.78px;color:#1a1a1a">              bandListEUTRA {</pre>
<pre class="t mono" style="left:5.8px;top:434.24px;font-size:6.78px;color:#1a1a1a">                {</pre>
<pre class="t mono" style="left:5.8px;top:442.65px;font-size:6.78px;color:#1a1a1a">                  interFreqBandList {</pre>
<pre class="t mono" style="left:5.8px;top:451.06px;font-size:6.78px;color:#1a1a1a">                    {</pre>
<pre class="t mono" style="left:5.8px;top:459.47px;font-size:6.78px;color:#1a1a1a">                      interFreqNeedForGaps FALSE</pre>
<pre class="t mono" style="left:5.8px;top:467.88px;font-size:6.78px;color:#1a1a1a">                    },</pre>
</div>
<div class="win" style="left:35px;top:107.4px;width:403.5px;height:205px;box-shadow:0 0 3px rgba(0,0,0,0.35)"></div>
<div class="t b" style="left:39.8px;top:112.6px;font-size:6.5px;color:#fff">Statistics</div>
<svg class="a" style="left:415.5px;top:112.2px" width="8.2" height="8.2" viewBox="0 0 8 8"><circle cx="4" cy="4" r="3.9" fill="#a6cff0"/><path d="M4.6 2.4h1.2v1.2M3.4 5.6H2.2V4.4" fill="none" stroke="#2b86cd" stroke-width="1.2"/></svg>
<svg class="a" style="left:426.6px;top:112.2px" width="8.2" height="8.2" viewBox="0 0 8 8"><circle cx="4" cy="4" r="3.9" fill="#a6cff0"/><path d="M2.5 2.5l3 3M5.5 2.5L2.5 5.5" stroke="#2b86cd" stroke-width="1.25"/></svg>
<div class="a" style="left:37.8px;top:125.3px;width:34.6px;height:184.5px;background:#fff"></div>
<div class="a" style="left:37.8px;top:125.3px;width:28.4px;height:11.6px;background:#f1f1f1"></div>
<div class="t" style="left:40.2px;top:127.6px;font-size:6.6px">UE ID</div>
<div class="t" style="left:40.2px;top:139.2px;font-size:6.6px">Global...</div>
<div class="a" style="left:37.8px;top:148.4px;width:28.4px;height:11.8px;background:#c1ddf1"></div>
<div class="t" style="left:40.2px;top:151.2px;font-size:6.6px">1 (101...</div>
<div class="a" style="left:75px;top:125.3px;width:361px;height:25.2px;background:#fff"></div>
<div class="t" style="left:79px;top:130.6px;font-size:6.6px;line-height:8.3px;white-space:normal;width:34px">Average time:</div>
<div class="sel" style="left:121.3px;top:128.6px;width:36.4px;height:18.6px"></div>
<div class="t" style="left:124.5px;top:135.2px;font-size:6.4px">250</div>
<svg class="a" style="left:150.6px;top:132px" width="3.4" height="6" viewBox="0 0 3.4 6"><path d="M0.3 2L1.7 0.5 3.1 2M0.3 4L1.7 5.5 3.1 4" fill="none" stroke="#666" stroke-width="0.7"/></svg>
<div class="t" style="left:162px;top:135.2px;font-size:6.6px">By cell:</div>
<div class="cb" style="left:187.7px;top:135.4px"></div>
<div class="a" style="left:75px;top:150.5px;width:361px;height:17px;background:#157fcc"></div>
<div class="a" style="left:75px;top:150.5px;width:49px;height:16px;background:#add2ed"></div>
<div class="t b" style="left:75px;width:49px;text-align:center;top:155.3px;font-size:6.5px;color:#157fcc">Throughput</div>
<div class="a" style="left:125.2px;top:150.5px;width:25.3px;height:15.6px;background:#4b9cd7"></div>
<div class="t b" style="left:125.2px;width:25.3px;text-align:center;top:155.3px;font-size:6.5px;color:#fff">SNR</div>
<div class="a" style="left:151.6px;top:150.5px;width:22.3px;height:15.6px;background:#4b9cd7"></div>
<div class="t b" style="left:151.6px;width:22.3px;text-align:center;top:155.3px;font-size:6.5px;color:#fff">CQI</div>
<div class="a" style="left:175px;top:150.5px;width:61.8px;height:15.6px;background:#4b9cd7"></div>
<div class="t b" style="left:175px;width:61.8px;text-align:center;top:155.3px;font-size:6.5px;color:#fff">Timing advance</div>
<div class="a" style="left:238px;top:150.5px;width:25.7px;height:15.6px;background:#4b9cd7"></div>
<div class="t b" style="left:238px;width:25.7px;text-align:center;top:155.3px;font-size:6.5px;color:#fff">Rank</div>
<div class="a" style="left:264.9px;top:150.5px;width:57.6px;height:15.6px;background:#4b9cd7"></div>
<div class="t b" style="left:264.9px;width:57.6px;text-align:center;top:155.3px;font-size:6.5px;color:#fff">RX/TX packets</div>
<div class="a" style="left:75px;top:166px;width:361px;height:1.6px;background:#add2ed"></div>
<div class="a" style="left:75px;top:167.6px;width:361px;height:142.2px;background:#f1f1f1"></div>
<div class="a" style="left:79px;top:172.4px;width:120px;height:137.4px;border-left:0.6px solid #dcdcdc;border-top:0.6px solid #dcdcdc;border-right:0.6px solid #d0d0d0"></div>
<div class="a" style="left:199px;top:288px;width:237px;height:0.6px;background:#dadada"></div>
<div class="a" style="left:80.5px;top:174.5px;width:107.3px;height:11.4px;background:#1ee6ff"></div>
<div class="t b" style="left:81.6px;top:177.2px;font-size:6.3px;color:#000">PHY UL 1</div>
<div class="a" style="left:80.5px;top:186.6px;width:107.3px;height:11px;background:#ff1ef0"></div>
<div class="t b" style="left:81.6px;top:189.2px;font-size:6.3px;color:#000">PHY DL 1</div>
<svg class="a" style="left:199.6px;top:168px" width="236.4" height="125" viewBox="199.6 168 236.4 125" font-family="Liberation Sans, sans-serif"><rect x="235.3" y="172.7" width="210" height="105.10000000000002" fill="#f4f4f4" stroke="#8c8c8c" stroke-width="0.7"/><text x="232" y="176.1" font-size="5.1" text-anchor="end" fill="#222">288Mbps</text><text x="232" y="201.6" font-size="5.1" text-anchor="end" fill="#222">216Mbps</text><text x="232" y="227.29999999999998" font-size="5.1" text-anchor="end" fill="#222">144Mbps</text><text x="232" y="253.5" font-size="5.1" text-anchor="end" fill="#222">72.0Mbps</text><text x="232" y="279.3" font-size="5.1" text-anchor="end" fill="#222">0bps</text><text x="253.8" y="285.3" font-size="5.05" text-anchor="middle" fill="#222">09:31:44</text><text x="279.9" y="285.3" font-size="5.05" text-anchor="middle" fill="#222">09:31:52</text><text x="306.0" y="285.3" font-size="5.05" text-anchor="middle" fill="#222">09:32:00</text><text x="332.1" y="285.3" font-size="5.05" text-anchor="middle" fill="#222">09:32:08</text><text x="358.2" y="285.3" font-size="5.05" text-anchor="middle" fill="#222">09:32:16</text><text x="384.3" y="285.3" font-size="5.05" text-anchor="middle" fill="#222">09:32:24</text><text x="410.4" y="285.3" font-size="5.05" text-anchor="middle" fill="#222">09:32:32</text><text x="436.5" y="285.3" font-size="5.05" text-anchor="middle" fill="#222">09:32:40</text><line x1="398" y1="172.7" x2="398" y2="277.8" stroke="#8a8a8a" stroke-width="0.7"/><line x1="235.3" y1="277.2" x2="436" y2="277.2" stroke="#40d8e8" stroke-width="0.8"/><polyline fill="none" stroke="#f52ee6" stroke-width="1.15" points="235.3,277.3 242.4,277.3 244.4,184.6 244.8,184.3 245.4,184.3 246.0,184.5 246.6,184.3 247.2,184.3 247.8,184.3 248.4,184.2 249.0,184.3 249.6,184.3 250.2,184.4 250.8,184.2 251.4,184.2 252.0,184.2 252.6,184.4 253.2,184.4 253.8,184.1 254.4,184.5 255.0,184.5 255.6,184.4 256.2,184.3 256.8,184.2 257.4,184.1 258.0,184.3 258.6,184.1 259.2,184.2 259.8,184.2 260.4,184.1 261.0,184.3 261.6,184.3 262.2,184.4 262.8,184.3 263.4,184.4 264.0,184.3 264.6,184.4 264.6,184.3 265.1,195.0 265.6,184.3 265.2,184.3 265.8,184.2 266.4,184.5 267.0,184.5 267.6,184.4 268.2,184.4 268.8,184.2 269.4,184.2 270.0,184.2 270.6,184.1 271.2,184.4 271.8,184.3 272.4,184.4 273.0,184.3 273.6,184.5 274.2,184.4 274.8,184.1 275.4,184.2 276.0,184.4 276.6,184.3 277.2,184.5 277.0,184.3 277.5,182.0 277.9,197.0 278.6,184.3 277.8,184.3 278.4,184.1 279.0,184.3 279.6,184.4 280.2,184.2 280.8,184.2 281.4,184.2 282.0,184.5 282.6,184.4 283.2,184.2 283.8,184.2 284.4,184.2 285.0,184.1 285.6,184.4 286.2,184.2 286.8,184.3 287.4,184.3 288.0,184.2 288.6,184.4 289.2,184.2 289.8,184.4 290.4,184.2 291.0,184.3 291.6,184.2 292.2,184.2 292.8,184.5 293.4,184.4 294.0,184.2 294.6,184.4 295.2,184.2 295.8,184.3 296.4,184.4 297.0,184.4 297.6,184.2 298.2,184.5 298.8,184.2 299.4,184.2 300.0,184.4 300.6,184.2 301.2,184.2 301.8,184.1 302.4,184.2 303.0,184.3 303.6,184.2 304.2,184.3 304.8,184.3 305.4,184.3 306.0,184.5 306.6,184.3 307.2,184.3 307.8,184.4 308.4,184.2 309.0,184.2 309.6,184.4 310.2,184.4 310.8,184.2 311.4,184.2 312.0,184.4 312.6,184.5 313.2,184.2 313.8,184.5 314.4,184.4 315.0,184.3 315.6,184.3 316.2,184.2 316.8,184.1 317.4,184.5 318.0,184.2 318.6,184.4 319.2,184.2 319.8,184.4 320.4,184.3 321.0,184.2 321.6,184.2 322.2,184.4 322.8,184.1 323.4,184.2 324.0,184.3 324.6,184.4 325.2,184.3 325.8,184.2 326.4,184.5 327.0,184.2 327.6,184.1 328.2,184.2 328.8,184.3 329.4,184.1 330.0,184.2 330.6,184.3 331.2,184.3 331.8,184.2 332.4,184.3 333.0,184.4 333.6,184.5 334.2,184.4 334.8,184.4 335.4,184.3 336.0,184.2 336.6,184.1 337.2,184.1 337.8,184.4 338.4,184.4 339.0,184.5 339.6,184.1 340.2,184.3 340.8,184.3 341.4,184.4 342.0,184.2 342.6,184.5 343.2,184.1 343.8,184.3 344.4,184.4 345.0,184.4 345.6,184.4 346.2,184.4 346.8,184.4 347.4,184.4 348.0,184.2 348.6,184.4 349.2,184.4 349.8,184.4 350.4,184.3 351.0,184.4 351.6,184.4 352.2,184.3 352.8,184.3 353.4,184.3 354.0,184.3 354.6,184.3 355.2,184.1 355.8,184.4 356.4,184.5 357.0,184.4 357.6,184.4 358.2,184.3 358.8,184.4 359.4,184.3 360.0,184.3 360.6,184.4 361.2,184.2 361.8,184.4 362.4,184.1 363.0,184.3 363.6,184.3 364.2,184.2 364.8,184.4 365.4,184.3 366.0,184.3 366.6,184.5 367.2,184.2 367.8,184.1 368.4,184.2 369.0,184.4 369.6,184.2 370.2,184.2 370.8,184.4 371.4,184.4 372.0,184.3 372.6,184.4 373.2,184.2 373.8,184.4 374.4,184.2 375.0,184.3 375.6,184.4 376.2,184.4 376.8,184.4 377.4,184.3 378.0,184.3 378.6,184.2 379.2,184.2 379.0,184.3 379.6,197.0 380.2,175.2 381.0,184.3 379.8,184.3 380.4,184.4 381.0,184.4 381.6,184.4 382.2,184.5 382.8,184.2 383.4,184.2 384.0,184.3 384.6,184.2 385.2,184.2 385.8,184.3 386.4,184.3 387.0,184.3 387.6,184.2 388.2,184.4 388.8,184.5 389.4,184.3 390.0,184.1 390.6,184.1 391.2,184.4 391.8,184.1 392.4,184.4 393.0,184.3 393.6,184.2 394.2,184.4 394.8,184.1 395.4,184.2 396.0,184.3 396.6,184.1 397.2,184.4 397.8,184.2 398.4,184.2 399.0,184.1 399.6,184.3 400.2,184.3 400.8,184.3 401.4,184.4 402.0,184.4 402.6,184.5 403.2,184.4 403.8,184.2 404.4,184.3 405.0,184.2 405.6,184.1 406.2,184.3 406.8,184.4 407.4,184.2 408.0,184.2 408.6,184.2 409.2,184.4 409.8,184.3 410.4,184.3 411.0,184.4 411.6,184.3 412.3,184.5 414.6,277.3"/></svg>
<div class="win" style="left:458.4px;top:227px;width:399.8px;height:246.8px;box-shadow:0 0 3px rgba(0,0,0,0.35)"></div>
<div class="t b" style="left:463.4px;top:232.2px;font-size:6.55px;color:#fff">Ressource Block Allocation</div>
<svg class="a" style="left:834.9px;top:231.6px" width="8.2" height="8.2" viewBox="0 0 8 8"><circle cx="4" cy="4" r="3.9" fill="#a6cff0"/><path d="M4.6 2.4h1.2v1.2M3.4 5.6H2.2V4.4" fill="none" stroke="#2b86cd" stroke-width="1.2"/></svg>
<svg class="a" style="left:846.0px;top:231.6px" width="8.2" height="8.2" viewBox="0 0 8 8"><circle cx="4" cy="4" r="3.9" fill="#a6cff0"/><path d="M2.5 2.5l3 3M5.5 2.5L2.5 5.5" stroke="#2b86cd" stroke-width="1.25"/></svg>
<div class="a" style="left:461.6px;top:243.8px;width:123px;height:227px;background:#fff;overflow:hidden" id="rbl">
<div class="btn" style="left:4.399999999999977px;top:3.6999999999999886px;width:15.6px;height:11.8px"></div>
<div class="btn" style="left:24.399999999999977px;top:3.6999999999999886px;width:15.6px;height:11.8px"></div>
<div class="btn" style="left:43.69999999999999px;top:3.6999999999999886px;width:15.6px;height:11.8px"></div>
<div class="a" style="left:7.599999999999966px;top:8.5px;width:9px;height:2.4px;background:#e8262a;border-radius:0.6px"></div>
<svg class="a" style="left:27.799999999999955px;top:5.199999999999989px" width="9" height="9" viewBox="0 0 9 9"><path d="M3.2 0.4h2.6v2.8h2.8v2.6H5.8v2.8H3.2V5.8H0.4V3.2h2.8z" fill="#3fae2a" stroke="#2a8a1a" stroke-width="0.4"/></svg>
<svg class="a" style="left:47.0px;top:5.199999999999989px" width="9" height="9" viewBox="0 0 9 9"><circle cx="3.6" cy="3.6" r="2.6" fill="#e8f4ff" stroke="#7a99b8" stroke-width="0.9"/><path d="M5.6 5.6L8.3 8.3" stroke="#555" stroke-width="1.3"/></svg>
<div class="a" style="left:0;top:18.399999999999977px;width:123px;height:0.6px;background:#dedede"></div>
<div class="t" style="left:4.399999999999977px;top:23.899999999999977px;font-size:6.6px">Time:</div>
<div class="sel" style="left:26.0px;top:21.599999999999966px;width:93.4px;height:11.8px"></div>
<div class="t" style="left:30.0px;top:24.19999999999999px;font-size:6.4px">9:31:48.904</div>
<div class="a" style="left:0;top:35.80000000000001px;width:123px;height:0.6px;background:#dedede"></div>
<div class="cb" style="left:5.0px;top:42.19999999999999px"></div>
<div class="t" style="left:13.699999999999989px;top:42.0px;font-size:6.45px">Show non-DL SF (BL/CE or NB-IoT)</div>
<div class="a" style="left:0;top:54.19999999999999px;width:123px;height:10px;background:#f3f3f3;border-top:0.6px solid #dcdcdc;border-bottom:0.6px solid #dcdcdc"></div>
<div class="a" style="left:99.39999999999998px;top:54.80000000000001px;width:0.6px;height:9px;background:#d2d2d2"></div>
<div class="t" style="left:2.0px;top:56.19999999999999px;font-size:6.6px;color:#555">Cell</div>
<div class="t" style="left:102.60000000000002px;top:56.19999999999999px;font-size:6.6px;color:#555">Show</div>
<div class="a" style="left:0;top:64.39999999999998px;width:123px;height:12px;background:#fff;border-bottom:0.6px solid #f3f3f3"></div>
<div class="t" style="left:2.0px;top:67.19999999999999px;font-size:6.6px">enb0.log/#1 DL</div>
<div class="a" style="left:108.60000000000002px;top:67.0px;width:7px;height:7px;border:0.5px solid #e6e6e6;border-radius:1px"></div>
<svg class="a" style="left:109.19999999999993px;top:66.79999999999995px" width="7.6" height="7" viewBox="0 0 7 6.4"><path d="M0.8 3.6L2.6 5.4 6.4 0.8" fill="none" stroke="#777" stroke-width="0.75"/></svg>
<div class="a" style="left:0;top:76.39999999999998px;width:123px;height:12px;background:#fafafa;border-bottom:0.6px solid #f3f3f3"></div>
<div class="t" style="left:2.0px;top:79.19999999999999px;font-size:6.6px">enb0.log/#1 UL</div>
<div class="a" style="left:108.60000000000002px;top:79.0px;width:7px;height:7px;border:0.5px solid #e6e6e6;border-radius:1px"></div>
<svg class="a" style="left:109.19999999999993px;top:78.79999999999995px" width="7.6" height="7" viewBox="0 0 7 6.4"><path d="M0.8 3.6L2.6 5.4 6.4 0.8" fill="none" stroke="#777" stroke-width="0.75"/></svg>
<div class="a" style="left:0;top:88.39999999999998px;width:123px;height:12px;background:#fff;border-bottom:0.6px solid #f3f3f3"></div>
<div class="t" style="left:2.0px;top:91.19999999999999px;font-size:6.6px">enb0.log/#2 DL</div>
<div class="a" style="left:108.60000000000002px;top:91.0px;width:7px;height:7px;border:0.5px solid #e6e6e6;border-radius:1px"></div>
<svg class="a" style="left:109.19999999999993px;top:90.79999999999995px" width="7.6" height="7" viewBox="0 0 7 6.4"><path d="M0.8 3.6L2.6 5.4 6.4 0.8" fill="none" stroke="#777" stroke-width="0.75"/></svg>
<div class="a" style="left:0;top:100.39999999999998px;width:123px;height:12px;background:#fafafa;border-bottom:0.6px solid #f3f3f3"></div>
<div class="t" style="left:2.0px;top:103.19999999999999px;font-size:6.6px">enb0.log/#2 UL</div>
<div class="a" style="left:108.60000000000002px;top:103.0px;width:7px;height:7px;border:0.5px solid #e6e6e6;border-radius:1px"></div>
<svg class="a" style="left:109.19999999999993px;top:102.79999999999995px" width="7.6" height="7" viewBox="0 0 7 6.4"><path d="M0.8 3.6L2.6 5.4 6.4 0.8" fill="none" stroke="#777" stroke-width="0.75"/></svg>
<div class="a" style="left:0;top:112.59999999999997px;width:123px;height:10.6px;background:#f3f3f3;border-top:0.6px solid #dcdcdc;border-bottom:0.6px solid #dcdcdc"></div>
<div class="a" style="left:99.79999999999995px;top:113.19999999999999px;width:0.6px;height:9.6px;background:#d2d2d2"></div>
<div class="t" style="left:2.0px;top:114.80000000000001px;font-size:6.6px;color:#555;letter-spacing:0.25px">Legend</div>
<div class="a" style="left:0;top:123.19999999999999px;width:123px;height:13.9px;background:#fff;border-bottom:0.6px solid #f3f3f3"></div>
<div class="t" style="left:2.0px;top:125.80000000000001px;font-size:6.6px">PRACH</div>
<div class="a" style="left:108.0px;top:125.39999999999998px;width:7.6px;height:7.6px;background:#ffee00;border:0.6px solid #b8a800"></div>
<div class="a" style="left:0;top:137.09999999999997px;width:123px;height:13.9px;background:#fafafa;border-bottom:0.6px solid #f3f3f3"></div>
<div class="t" style="left:2.0px;top:139.7px;font-size:6.6px">SRS</div>
<div class="a" style="left:108.0px;top:139.29999999999995px;width:7.6px;height:7.6px;background:#ffff80;border:0.6px solid #b0b040"></div>
<div class="a" style="left:0;top:151.0px;width:123px;height:13.9px;background:#fff;border-bottom:0.6px solid #f3f3f3"></div>
<div class="t" style="left:2.0px;top:153.60000000000002px;font-size:6.6px">PUCCH</div>
<div class="a" style="left:108.0px;top:153.2px;width:7.6px;height:7.6px;background:#00f000;border:0.6px solid #00a000"></div>
<div class="a" style="left:0;top:164.89999999999998px;width:123px;height:13.9px;background:#fafafa;border-bottom:0.6px solid #f3f3f3"></div>
<div class="t" style="left:2.0px;top:167.5px;font-size:6.6px">PUSCH</div>
<div class="a" style="left:108.0px;top:167.09999999999997px;width:7.6px;height:7.6px;background:#ee1010;border:0.6px solid #a00000"></div>
<div class="a" style="left:0;top:178.8px;width:123px;height:13.9px;background:#fff;border-bottom:0.6px solid #f3f3f3"></div>
<div class="t" style="left:2.0px;top:181.40000000000003px;font-size:6.6px">PDSCH</div>
<div class="a" style="left:108.0px;top:181.0px;width:7.6px;height:7.6px;background:#0000ee;border:0.6px solid #0000a0"></div>
<div class="a" style="left:0;top:192.7px;width:123px;height:13.9px;background:#fafafa;border-bottom:0.6px solid #f3f3f3"></div>
<div class="t" style="left:2.0px;top:195.3px;font-size:6.6px">Retx</div>
<div class="a" style="left:108.0px;top:194.89999999999998px;width:7.6px;height:7.6px;background:#505050;border:0.6px solid #303030"></div>
<div class="a" style="left:0;top:206.59999999999997px;width:123px;height:13.9px;background:#fff;border-bottom:0.6px solid #f3f3f3"></div>
<div class="t" style="left:2.0px;top:209.2px;font-size:6.6px">ACK</div>
<div class="a" style="left:108.0px;top:208.79999999999995px;width:7.6px;height:7.6px;background:#a0a0a0;border:0.6px solid #707070"></div>
<div class="a" style="left:0;top:220.5px;width:123px;height:13.9px;background:#fafafa;border-bottom:0.6px solid #f3f3f3"></div>
<div class="t" style="left:2.0px;top:223.10000000000002px;font-size:6.6px">SIB, RA, Paging</div>
<div class="a" style="left:108.0px;top:222.7px;width:7.6px;height:7.6px;background:#202020;border:0.6px solid #000"></div>
</div>
<svg class="a" style="left:587.8px;top:243.8px" width="267.8" height="227" viewBox="587.8 243.8 267.8 227" font-family="Liberation Sans, sans-serif"><rect x="587.8" y="243.8" width="267.8" height="227" fill="#fff"/><rect x="591.8" y="249.6" width="260" height="3" rx="1.5" fill="#f4f4f4" stroke="#dcdcdc" stroke-width="0.5"/><circle cx="638" cy="251.1" r="2.6" fill="#fff" stroke="#999" stroke-width="0.6"/><circle cx="638" cy="251.1" r="0.9" fill="#333"/><text transform="translate(582.9,265) scale(1,1.22)" font-size="5.3" fill="#111">9:31:48.909</text><text x="601.2" y="273.3" font-size="5.2" text-anchor="middle" fill="#222">1.109</text><line x1="611.1" y1="259.6" x2="611.1" y2="275.4" stroke="#111" stroke-width="0.8"/><text transform="translate(602.6,265) scale(1,1.22)" font-size="5.3" fill="#111">9:31:48.919</text><text x="621.0" y="273.3" font-size="5.2" text-anchor="middle" fill="#222">1.110</text><line x1="630.8" y1="259.6" x2="630.8" y2="275.4" stroke="#111" stroke-width="0.8"/><text transform="translate(622.3,265) scale(1,1.22)" font-size="5.3" fill="#111">9:31:48.929</text><text x="640.7" y="273.3" font-size="5.2" text-anchor="middle" fill="#222">1.111</text><line x1="650.5" y1="259.6" x2="650.5" y2="275.4" stroke="#111" stroke-width="0.8"/><text transform="translate(642.0,265) scale(1,1.22)" font-size="5.3" fill="#111">9:31:48.939</text><text x="660.4" y="273.3" font-size="5.2" text-anchor="middle" fill="#222">1.112</text><line x1="670.2" y1="259.6" x2="670.2" y2="275.4" stroke="#111" stroke-width="0.8"/><text transform="translate(661.7,265) scale(1,1.22)" font-size="5.3" fill="#111">9:31:48.949</text><text x="680.1" y="273.3" font-size="5.2" text-anchor="middle" fill="#222">1.113</text><line x1="689.9" y1="259.6" x2="689.9" y2="275.4" stroke="#111" stroke-width="0.8"/><text transform="translate(681.4,265) scale(1,1.22)" font-size="5.3" fill="#111">9:31:48.959</text><text x="699.8" y="273.3" font-size="5.2" text-anchor="middle" fill="#222">1.114</text><line x1="709.6" y1="259.6" x2="709.6" y2="275.4" stroke="#111" stroke-width="0.8"/><text transform="translate(701.1,265) scale(1,1.22)" font-size="5.3" fill="#111">9:31:48.969</text><text x="719.5" y="273.3" font-size="5.2" text-anchor="middle" fill="#222">1.115</text><line x1="729.3" y1="259.6" x2="729.3" y2="275.4" stroke="#111" stroke-width="0.8"/><text transform="translate(720.8,265) scale(1,1.22)" font-size="5.3" fill="#111">9:31:48.979</text><text x="739.1" y="273.3" font-size="5.2" text-anchor="middle" fill="#222">1.116</text><line x1="749.0" y1="259.6" x2="749.0" y2="275.4" stroke="#111" stroke-width="0.8"/><text transform="translate(740.5,265) scale(1,1.22)" font-size="5.3" fill="#111">9:31:48.989</text><text x="758.9" y="273.3" font-size="5.2" text-anchor="middle" fill="#222">1.117</text><line x1="768.7" y1="259.6" x2="768.7" y2="275.4" stroke="#111" stroke-width="0.8"/><text transform="translate(760.2,265) scale(1,1.22)" font-size="5.3" fill="#111">9:31:48.999</text><text x="778.6" y="273.3" font-size="5.2" text-anchor="middle" fill="#222">1.118</text><line x1="788.4" y1="259.6" x2="788.4" y2="275.4" stroke="#111" stroke-width="0.8"/><text transform="translate(779.9,265) scale(1,1.22)" font-size="5.3" fill="#111">9:31:49.009</text><text x="798.2" y="273.3" font-size="5.2" text-anchor="middle" fill="#222">1.119</text><line x1="808.1" y1="259.6" x2="808.1" y2="275.4" stroke="#111" stroke-width="0.8"/><text transform="translate(799.6,265) scale(1,1.22)" font-size="5.3" fill="#111">9:31:49.019</text><text x="818.0" y="273.3" font-size="5.2" text-anchor="middle" fill="#222">1.120</text><line x1="827.8" y1="259.6" x2="827.8" y2="275.4" stroke="#111" stroke-width="0.8"/><text transform="translate(819.3,265) scale(1,1.22)" font-size="5.3" fill="#111">9:31:49.029</text><text x="837.6" y="273.3" font-size="5.2" text-anchor="middle" fill="#222">1.121</text><line x1="847.5" y1="259.6" x2="847.5" y2="275.4" stroke="#111" stroke-width="0.8"/><text transform="translate(839.0,265) scale(1,1.22)" font-size="5.3" fill="#111">9:31:49.039</text><text x="857.4" y="273.3" font-size="5.2" text-anchor="middle" fill="#222">1.122</text><line x1="595.2" y1="276.4" x2="595.2" y2="322" stroke="#9a9a9a" stroke-width="1" stroke-dasharray="1.2 0.5"/><line x1="595.2" y1="326.4" x2="595.2" y2="372.6" stroke="#9a9a9a" stroke-width="1" stroke-dasharray="1.2 0.5"/><line x1="595.2" y1="377.4" x2="595.2" y2="422.5" stroke="#9a9a9a" stroke-width="1" stroke-dasharray="1.2 0.5"/><line x1="595.2" y1="427.5" x2="595.2" y2="471" stroke="#9a9a9a" stroke-width="1" stroke-dasharray="1.2 0.5"/><rect x="601.0" y="276.4" width="254.60000000000002" height="45.60000000000002" fill="#1a1ae4"/><line x1="602.97" y1="276.4" x2="602.97" y2="322.0" stroke="#0a0aa8" stroke-width="0.35" opacity="0.7"/><line x1="604.94" y1="276.4" x2="604.94" y2="322.0" stroke="#0a0aa8" stroke-width="0.35" opacity="0.7"/><line x1="606.91" y1="276.4" x2="606.91" y2="322.0" stroke="#0a0aa8" stroke-width="0.35" opacity="0.7"/><line x1="608.88" y1="276.4" x2="608.88" y2="322.0" stroke="#0a0aa8" stroke-width="0.35" opacity="0.7"/><line x1="610.85" y1="276.4" x2="610.85" y2="322.0" stroke="#0a0aa8" stroke-width="0.35" opacity="0.7"/><line x1="612.82" y1="276.4" x2="612.82" y2="322.0" stroke="#0a0aa8" stroke-width="0.35" opacity="0.7"/><line x1="614.79" y1="276.4" x2="614.79" y2="322.0" stroke="#0a0aa8" stroke-width="0.35" opacity="0.7"/><line x1="616.76" y1="276.4" x2="616.76" y2="322.0" stroke="#0a0aa8" stroke-width="0.35" opacity="0.7"/><line x1="618.73" y1="276.4" x2="618.73" y2="322.0" stroke="#0a0aa8" stroke-width="0.35" opacity="0.7"/><line x1="620.70" y1="276.4" x2="620.70" y2="322.0" stroke="#0a0aa8" stroke-width="0.35" opacity="0.7"/><line x1="622.67" y1="276.4" x2="622.67" y2="322.0" stroke="#0a0aa8" stroke-width="0.35" opacity="0.7"/><line x1="624.64" y1="276.4" x2="624.64" y2="322.0" stroke="#0a0aa8" stroke-width="0.35" opacity="0.7"/><line x1="626.61" y1="276.4" x2="626.61" y2="322.0" stroke="#0a0aa8" stroke-width="0.35" opacity="0.7"/><line x1="628.58" y1="276.4" x2="628.58" y2="322.0" stroke="#0a0aa8" stroke-width="0.35" opacity="0.7"/><line x1="630.55" y1="276.4" x2="630.55" y2="322.0" stroke="#0a0aa8" stroke-width="0.35" opacity="0.7"/><line x1="632.52" y1="276.4" x2="632.52" y2="322.0" stroke="#0a0aa8" stroke-width="0.35" opacity="0.7"/><line x1="634.49" y1="276.4" x2="634.49" y2="322.0" stroke="#0a0aa8" stroke-width="0.35" opacity="0.7"/><line x1="636.46" y1="276.4" x2="636.46" y2="322.0" stroke="#0a0aa8" stroke-width="0.35" opacity="0.7"/><line x1="638.43" y1="276.4" x2="638.43" y2="322.0" stroke="#0a0aa8" stroke-width="0.35" opacity="0.7"/><line x1="640.40" y1="276.4" x2="640.40" y2="322.0" stroke="#0a0aa8" stroke-width="0.35" opacity="0.7"/><line x1="642.37" y1="276.4" x2="642.37" y2="322.0" stroke="#0a0aa8" stroke-width="0.35" opacity="0.7"/><line x1="644.34" y1="276.4" x2="644.34" y2="322.0" stroke="#0a0aa8" stroke-width="0.35" opacity="0.7"/><line x1="646.31" y1="276.4" x2="646.31" y2="322.0" stroke="#0a0aa8" stroke-width="0.35" opacity="0.7"/><line x1="648.28" y1="276.4" x2="648.28" y2="322.0" stroke="#0a0aa8" stroke-width="0.35" opacity="0.7"/><line x1="650.25" y1="276.4" x2="650.25" y2="322.0" stroke="#0a0aa8" stroke-width="0.35" opacity="0.7"/><line x1="652.22" y1="276.4" x2="652.22" y2="322.0" stroke="#0a0aa8" stroke-width="0.35" opacity="0.7"/><line x1="654.19" y1="276.4" x2="654.19" y2="322.0" stroke="#0a0aa8" stroke-width="0.35" opacity="0.7"/><line x1="656.16" y1="276.4" x2="656.16" y2="322.0" stroke="#0a0aa8" stroke-width="0.35" opacity="0.7"/><line x1="658.13" y1="276.4" x2="658.13" y2="322.0" stroke="#0a0aa8" stroke-width="0.35" opacity="0.7"/><line x1="660.10" y1="276.4" x2="660.10" y2="322.0" stroke="#0a0aa8" stroke-width="0.35" opacity="0.7"/><line x1="662.07" y1="276.4" x2="662.07" y2="322.0" stroke="#0a0aa8" stroke-width="0.35" opacity="0.7"/><line x1="664.04" y1="276.4" x2="664.04" y2="322.0" stroke="#0a0aa8" stroke-width="0.35" opacity="0.7"/><line x1="666.01" y1="276.4" x2="666.01" y2="322.0" stroke="#0a0aa8" stroke-width="0.35" opacity="0.7"/><line x1="667.98" y1="276.4" x2="667.98" y2="322.0" stroke="#0a0aa8" stroke-width="0.35" opacity="0.7"/><line x1="669.95" y1="276.4" x2="669.95" y2="322.0" stroke="#0a0aa8" stroke-width="0.35" opacity="0.7"/><line x1="671.92" y1="276.4" x2="671.92" y2="322.0" stroke="#0a0aa8" stroke-width="0.35" opacity="0.7"/><line x1="673.89" y1="276.4" x2="673.89" y2="322.0" stroke="#0a0aa8" stroke-width="0.35" opacity="0.7"/><line x1="675.86" y1="276.4" x2="675.86" y2="322.0" stroke="#0a0aa8" stroke-width="0.35" opacity="0.7"/><line x1="677.83" y1="276.4" x2="677.83" y2="322.0" stroke="#0a0aa8" stroke-width="0.35" opacity="0.7"/><line x1="679.80" y1="276.4" x2="679.80" y2="322.0" stroke="#0a0aa8" stroke-width="0.35" opacity="0.7"/><line x1="681.77" y1="276.4" x2="681.77" y2="322.0" stroke="#0a0aa8" stroke-width="0.35" opacity="0.7"/><line x1="683.74" y1="276.4" x2="683.74" y2="322.0" stroke="#0a0aa8" stroke-width="0.35" opacity="0.7"/><line x1="685.71" y1="276.4" x2="685.71" y2="322.0" stroke="#0a0aa8" stroke-width="0.35" opacity="0.7"/><line x1="687.68" y1="276.4" x2="687.68" y2="322.0" stroke="#0a0aa8" stroke-width="0.35" opacity="0.7"/><line x1="689.65" y1="276.4" x2="689.65" y2="322.0" stroke="#0a0aa8" stroke-width="0.35" opacity="0.7"/><line x1="691.62" y1="276.4" x2="691.62" y2="322.0" stroke="#0a0aa8" stroke-width="0.35" opacity="0.7"/><line x1="693.59" y1="276.4" x2="693.59" y2="322.0" stroke="#0a0aa8" stroke-width="0.35" opacity="0.7"/><line x1="695.56" y1="276.4" x2="695.56" y2="322.0" stroke="#0a0aa8" stroke-width="0.35" opacity="0.7"/><line x1="697.53" y1="276.4" x2="697.53" y2="322.0" stroke="#0a0aa8" stroke-width="0.35" opacity="0.7"/><line x1="699.50" y1="276.4" x2="699.50" y2="322.0" stroke="#0a0aa8" stroke-width="0.35" opacity="0.7"/><line x1="701.47" y1="276.4" x2="701.47" y2="322.0" stroke="#0a0aa8" stroke-width="0.35" opacity="0.7"/><line x1="703.44" y1="276.4" x2="703.44" y2="322.0" stroke="#0a0aa8" stroke-width="0.35" opacity="0.7"/><line x1="705.41" y1="276.4" x2="705.41" y2="322.0" stroke="#0a0aa8" stroke-width="0.35" opacity="0.7"/><line x1="707.38" y1="276.4" x2="707.38" y2="322.0" stroke="#0a0aa8" stroke-width="0.35" opacity="0.7"/><line x1="709.35" y1="276.4" x2="709.35" y2="322.0" stroke="#0a0aa8" stroke-width="0.35" opacity="0.7"/><line x1="711.32" y1="276.4" x2="711.32" y2="322.0" stroke="#0a0aa8" stroke-width="0.35" opacity="0.7"/><line x1="713.29" y1="276.4" x2="713.29" y2="322.0" stroke="#0a0aa8" stroke-width="0.35" opacity="0.7"/><line x1="715.26" y1="276.4" x2="715.26" y2="322.0" stroke="#0a0aa8" stroke-width="0.35" opacity="0.7"/><line x1="717.23" y1="276.4" x2="717.23" y2="322.0" stroke="#0a0aa8" stroke-width="0.35" opacity="0.7"/><line x1="719.20" y1="276.4" x2="719.20" y2="322.0" stroke="#0a0aa8" stroke-width="0.35" opacity="0.7"/><line x1="721.17" y1="276.4" x2="721.17" y2="322.0" stroke="#0a0aa8" stroke-width="0.35" opacity="0.7"/><line x1="723.14" y1="276.4" x2="723.14" y2="322.0" stroke="#0a0aa8" stroke-width="0.35" opacity="0.7"/><line x1="725.11" y1="276.4" x2="725.11" y2="322.0" stroke="#0a0aa8" stroke-width="0.35" opacity="0.7"/><line x1="727.08" y1="276.4" x2="727.08" y2="322.0" stroke="#0a0aa8" stroke-width="0.35" opacity="0.7"/><line x1="729.05" y1="276.4" x2="729.05" y2="322.0" stroke="#0a0aa8" stroke-width="0.35" opacity="0.7"/><line x1="731.02" y1="276.4" x2="731.02" y2="322.0" stroke="#0a0aa8" stroke-width="0.35" opacity="0.7"/><line x1="732.99" y1="276.4" x2="732.99" y2="322.0" stroke="#0a0aa8" stroke-width="0.35" opacity="0.7"/><line x1="734.96" y1="276.4" x2="734.96" y2="322.0" stroke="#0a0aa8" stroke-width="0.35" opacity="0.7"/><line x1="736.93" y1="276.4" x2="736.93" y2="322.0" stroke="#0a0aa8" stroke-width="0.35" opacity="0.7"/><line x1="738.90" y1="276.4" x2="738.90" y2="322.0" stroke="#0a0aa8" stroke-width="0.35" opacity="0.7"/><line x1="740.87" y1="276.4" x2="740.87" y2="322.0" stroke="#0a0aa8" stroke-width="0.35" opacity="0.7"/><line x1="742.84" y1="276.4" x2="742.84" y2="322.0" stroke="#0a0aa8" stroke-width="0.35" opacity="0.7"/><line x1="744.81" y1="276.4" x2="744.81" y2="322.0" stroke="#0a0aa8" stroke-width="0.35" opacity="0.7"/><line x1="746.78" y1="276.4" x2="746.78" y2="322.0" stroke="#0a0aa8" stroke-width="0.35" opacity="0.7"/><line x1="748.75" y1="276.4" x2="748.75" y2="322.0" stroke="#0a0aa8" stroke-width="0.35" opacity="0.7"/><line x1="750.72" y1="276.4" x2="750.72" y2="322.0" stroke="#0a0aa8" stroke-width="0.35" opacity="0.7"/><line x1="752.69" y1="276.4" x2="752.69" y2="322.0" stroke="#0a0aa8" stroke-width="0.35" opacity="0.7"/><line x1="754.66" y1="276.4" x2="754.66" y2="322.0" stroke="#0a0aa8" stroke-width="0.35" opacity="0.7"/><line x1="756.63" y1="276.4" x2="756.63" y2="322.0" stroke="#0a0aa8" stroke-width="0.35" opacity="0.7"/><line x1="758.60" y1="276.4" x2="758.60" y2="322.0" stroke="#0a0aa8" stroke-width="0.35" opacity="0.7"/><line x1="760.57" y1="276.4" x2="760.57" y2="322.0" stroke="#0a0aa8" stroke-width="0.35" opacity="0.7"/><line x1="762.54" y1="276.4" x2="762.54" y2="322.0" stroke="#0a0aa8" stroke-width="0.35" opacity="0.7"/><line x1="764.51" y1="276.4" x2="764.51" y2="322.0" stroke="#0a0aa8" stroke-width="0.35" opacity="0.7"/><line x1="766.48" y1="276.4" x2="766.48" y2="322.0" stroke="#0a0aa8" stroke-width="0.35" opacity="0.7"/><line x1="768.45" y1="276.4" x2="768.45" y2="322.0" stroke="#0a0aa8" stroke-width="0.35" opacity="0.7"/><line x1="770.42" y1="276.4" x2="770.42" y2="322.0" stroke="#0a0aa8" stroke-width="0.35" opacity="0.7"/><line x1="772.39" y1="276.4" x2="772.39" y2="322.0" stroke="#0a0aa8" stroke-width="0.35" opacity="0.7"/><line x1="774.36" y1="276.4" x2="774.36" y2="322.0" stroke="#0a0aa8" stroke-width="0.35" opacity="0.7"/><line x1="776.33" y1="276.4" x2="776.33" y2="322.0" stroke="#0a0aa8" stroke-width="0.35" opacity="0.7"/><line x1="778.30" y1="276.4" x2="778.30" y2="322.0" stroke="#0a0aa8" stroke-width="0.35" opacity="0.7"/><line x1="780.27" y1="276.4" x2="780.27" y2="322.0" stroke="#0a0aa8" stroke-width="0.35" opacity="0.7"/><line x1="782.24" y1="276.4" x2="782.24" y2="322.0" stroke="#0a0aa8" stroke-width="0.35" opacity="0.7"/><line x1="784.21" y1="276.4" x2="784.21" y2="322.0" stroke="#0a0aa8" stroke-width="0.35" opacity="0.7"/><line x1="786.18" y1="276.4" x2="786.18" y2="322.0" stroke="#0a0aa8" stroke-width="0.35" opacity="0.7"/><line x1="788.15" y1="276.4" x2="788.15" y2="322.0" stroke="#0a0aa8" stroke-width="0.35" opacity="0.7"/><line x1="790.12" y1="276.4" x2="790.12" y2="322.0" stroke="#0a0aa8" stroke-width="0.35" opacity="0.7"/><line x1="792.09" y1="276.4" x2="792.09" y2="322.0" stroke="#0a0aa8" stroke-width="0.35" opacity="0.7"/><line x1="794.06" y1="276.4" x2="794.06" y2="322.0" stroke="#0a0aa8" stroke-width="0.35" opacity="0.7"/><line x1="796.03" y1="276.4" x2="796.03" y2="322.0" stroke="#0a0aa8" stroke-width="0.35" opacity="0.7"/><line x1="798.00" y1="276.4" x2="798.00" y2="322.0" stroke="#0a0aa8" stroke-width="0.35" opacity="0.7"/><line x1="799.97" y1="276.4" x2="799.97" y2="322.0" stroke="#0a0aa8" stroke-width="0.35" opacity="0.7"/><line x1="801.94" y1="276.4" x2="801.94" y2="322.0" stroke="#0a0aa8" stroke-width="0.35" opacity="0.7"/><line x1="803.91" y1="276.4" x2="803.91" y2="322.0" stroke="#0a0aa8" stroke-width="0.35" opacity="0.7"/><line x1="805.88" y1="276.4" x2="805.88" y2="322.0" stroke="#0a0aa8" stroke-width="0.35" opacity="0.7"/><line x1="807.85" y1="276.4" x2="807.85" y2="322.0" stroke="#0a0aa8" stroke-width="0.35" opacity="0.7"/><line x1="809.82" y1="276.4" x2="809.82" y2="322.0" stroke="#0a0aa8" stroke-width="0.35" opacity="0.7"/><line x1="811.79" y1="276.4" x2="811.79" y2="322.0" stroke="#0a0aa8" stroke-width="0.35" opacity="0.7"/><line x1="813.76" y1="276.4" x2="813.76" y2="322.0" stroke="#0a0aa8" stroke-width="0.35" opacity="0.7"/><line x1="815.73" y1="276.4" x2="815.73" y2="322.0" stroke="#0a0aa8" stroke-width="0.35" opacity="0.7"/><line x1="817.70" y1="276.4" x2="817.70" y2="322.0" stroke="#0a0aa8" stroke-width="0.35" opacity="0.7"/><line x1="819.67" y1="276.4" x2="819.67" y2="322.0" stroke="#0a0aa8" stroke-width="0.35" opacity="0.7"/><line x1="821.64" y1="276.4" x2="821.64" y2="322.0" stroke="#0a0aa8" stroke-width="0.35" opacity="0.7"/><line x1="823.61" y1="276.4" x2="823.61" y2="322.0" stroke="#0a0aa8" stroke-width="0.35" opacity="0.7"/><line x1="825.58" y1="276.4" x2="825.58" y2="322.0" stroke="#0a0aa8" stroke-width="0.35" opacity="0.7"/><line x1="827.55" y1="276.4" x2="827.55" y2="322.0" stroke="#0a0aa8" stroke-width="0.35" opacity="0.7"/><line x1="829.52" y1="276.4" x2="829.52" y2="322.0" stroke="#0a0aa8" stroke-width="0.35" opacity="0.7"/><line x1="831.49" y1="276.4" x2="831.49" y2="322.0" stroke="#0a0aa8" stroke-width="0.35" opacity="0.7"/><line x1="833.46" y1="276.4" x2="833.46" y2="322.0" stroke="#0a0aa8" stroke-width="0.35" opacity="0.7"/><line x1="835.43" y1="276.4" x2="835.43" y2="322.0" stroke="#0a0aa8" stroke-width="0.35" opacity="0.7"/><line x1="837.40" y1="276.4" x2="837.40" y2="322.0" stroke="#0a0aa8" stroke-width="0.35" opacity="0.7"/><line x1="839.37" y1="276.4" x2="839.37" y2="322.0" stroke="#0a0aa8" stroke-width="0.35" opacity="0.7"/><line x1="841.34" y1="276.4" x2="841.34" y2="322.0" stroke="#0a0aa8" stroke-width="0.35" opacity="0.7"/><line x1="843.31" y1="276.4" x2="843.31" y2="322.0" stroke="#0a0aa8" stroke-width="0.35" opacity="0.7"/><line x1="845.28" y1="276.4" x2="845.28" y2="322.0" stroke="#0a0aa8" stroke-width="0.35" opacity="0.7"/><line x1="847.25" y1="276.4" x2="847.25" y2="322.0" stroke="#0a0aa8" stroke-width="0.35" opacity="0.7"/><line x1="849.22" y1="276.4" x2="849.22" y2="322.0" stroke="#0a0aa8" stroke-width="0.35" opacity="0.7"/><line x1="851.19" y1="276.4" x2="851.19" y2="322.0" stroke="#0a0aa8" stroke-width="0.35" opacity="0.7"/><line x1="853.16" y1="276.4" x2="853.16" y2="322.0" stroke="#0a0aa8" stroke-width="0.35" opacity="0.7"/><line x1="855.13" y1="276.4" x2="855.13" y2="322.0" stroke="#0a0aa8" stroke-width="0.35" opacity="0.7"/><line x1="601.0" y1="282.20" x2="855.6" y2="282.20" stroke="#8a8a9a" stroke-width="0.5" opacity="0.75"/><line x1="601.0" y1="288.13" x2="855.6" y2="288.13" stroke="#8a8a9a" stroke-width="0.5" opacity="0.75"/><line x1="601.0" y1="294.06" x2="855.6" y2="294.06" stroke="#8a8a9a" stroke-width="0.5" opacity="0.75"/><line x1="601.0" y1="299.99" x2="855.6" y2="299.99" stroke="#8a8a9a" stroke-width="0.5" opacity="0.75"/><line x1="601.0" y1="305.92" x2="855.6" y2="305.92" stroke="#8a8a9a" stroke-width="0.5" opacity="0.75"/><line x1="601.0" y1="311.85" x2="855.6" y2="311.85" stroke="#8a8a9a" stroke-width="0.5" opacity="0.75"/><line x1="601.0" y1="317.78" x2="855.6" y2="317.78" stroke="#8a8a9a" stroke-width="0.5" opacity="0.75"/><rect x="609.8" y="276.4" width="1.5" height="45.60000000000002" fill="#fff"/><rect x="621.6" y="276.4" width="1.4" height="5.4" fill="#fff"/><rect x="650.8" y="276.4" width="1.4" height="11.4" fill="#fff"/><rect x="670.4" y="276.4" width="1.4" height="11.4" fill="#fff"/><rect x="700.2" y="276.4" width="1.4" height="5.4" fill="#fff"/><rect x="710.2" y="276.4" width="1.4" height="11.4" fill="#fff"/><rect x="779" y="276.4" width="1.4" height="5.4" fill="#fff"/><rect x="601.0" y="326.4" width="256.6" height="46.200000000000045" fill="#f5f5f5" stroke="#333" stroke-width="0.7"/><line x1="601.00" y1="326.4" x2="601.00" y2="372.6" stroke="#e6e6e6" stroke-width="0.25"/><line x1="602.97" y1="326.4" x2="602.97" y2="372.6" stroke="#e6e6e6" stroke-width="0.25"/><line x1="604.94" y1="326.4" x2="604.94" y2="372.6" stroke="#e6e6e6" stroke-width="0.25"/><line x1="606.91" y1="326.4" x2="606.91" y2="372.6" stroke="#e6e6e6" stroke-width="0.25"/><line x1="608.88" y1="326.4" x2="608.88" y2="372.6" stroke="#e6e6e6" stroke-width="0.25"/><line x1="610.85" y1="326.4" x2="610.85" y2="372.6" stroke="#e6e6e6" stroke-width="0.25"/><line x1="612.82" y1="326.4" x2="612.82" y2="372.6" stroke="#e6e6e6" stroke-width="0.25"/><line x1="614.79" y1="326.4" x2="614.79" y2="372.6" stroke="#e6e6e6" stroke-width="0.25"/><line x1="616.76" y1="326.4" x2="616.76" y2="372.6" stroke="#e6e6e6" stroke-width="0.25"/><line x1="618.73" y1="326.4" x2="618.73" y2="372.6" stroke="#e6e6e6" stroke-width="0.25"/><line x1="620.70" y1="326.4" x2="620.70" y2="372.6" stroke="#e6e6e6" stroke-width="0.25"/><line x1="622.67" y1="326.4" x2="622.67" y2="372.6" stroke="#e6e6e6" stroke-width="0.25"/><line x1="624.64" y1="326.4" x2="624.64" y2="372.6" stroke="#e6e6e6" stroke-width="0.25"/><line x1="626.61" y1="326.4" x2="626.61" y2="372.6" stroke="#e6e6e6" stroke-width="0.25"/><line x1="628.58" y1="326.4" x2="628.58" y2="372.6" stroke="#e6e6e6" stroke-width="0.25"/><line x1="630.55" y1="326.4" x2="630.55" y2="372.6" stroke="#e6e6e6" stroke-width="0.25"/><line x1="632.52" y1="326.4" x2="632.52" y2="372.6" stroke="#e6e6e6" stroke-width="0.25"/><line x1="634.49" y1="326.4" x2="634.49" y2="372.6" stroke="#e6e6e6" stroke-width="0.25"/><line x1="636.46" y1="326.4" x2="636.46" y2="372.6" stroke="#e6e6e6" stroke-width="0.25"/><line x1="638.43" y1="326.4" x2="638.43" y2="372.6" stroke="#e6e6e6" stroke-width="0.25"/><line x1="640.40" y1="326.4" x2="640.40" y2="372.6" stroke="#e6e6e6" stroke-width="0.25"/><line x1="642.37" y1="326.4" x2="642.37" y2="372.6" stroke="#e6e6e6" stroke-width="0.25"/><line x1="644.34" y1="326.4" x2="644.34" y2="372.6" stroke="#e6e6e6" stroke-width="0.25"/><line x1="646.31" y1="326.4" x2="646.31" y2="372.6" stroke="#e6e6e6" stroke-width="0.25"/><line x1="648.28" y1="326.4" x2="648.28" y2="372.6" stroke="#e6e6e6" stroke-width="0.25"/><line x1="650.25" y1="326.4" x2="650.25" y2="372.6" stroke="#e6e6e6" stroke-width="0.25"/><line x1="652.22" y1="326.4" x2="652.22" y2="372.6" stroke="#e6e6e6" stroke-width="0.25"/><line x1="654.19" y1="326.4" x2="654.19" y2="372.6" stroke="#e6e6e6" stroke-width="0.25"/><line x1="656.16" y1="326.4" x2="656.16" y2="372.6" stroke="#e6e6e6" stroke-width="0.25"/><line x1="658.13" y1="326.4" x2="658.13" y2="372.6" stroke="#e6e6e6" stroke-width="0.25"/><line x1="660.10" y1="326.4" x2="660.10" y2="372.6" stroke="#e6e6e6" stroke-width="0.25"/><line x1="662.07" y1="326.4" x2="662.07" y2="372.6" stroke="#e6e6e6" stroke-width="0.25"/><line x1="664.04" y1="326.4" x2="664.04" y2="372.6" stroke="#e6e6e6" stroke-width="0.25"/><line x1="666.01" y1="326.4" x2="666.01" y2="372.6" stroke="#e6e6e6" stroke-width="0.25"/><line x1="667.98" y1="326.4" x2="667.98" y2="372.6" stroke="#e6e6e6" stroke-width="0.25"/><line x1="669.95" y1="326.4" x2="669.95" y2="372.6" stroke="#e6e6e6" stroke-width="0.25"/><line x1="671.92" y1="326.4" x2="671.92" y2="372.6" stroke="#e6e6e6" stroke-width="0.25"/><line x1="673.89" y1="326.4" x2="673.89" y2="372.6" stroke="#e6e6e6" stroke-width="0.25"/><line x1="675.86" y1="326.4" x2="675.86" y2="372.6" stroke="#e6e6e6" stroke-width="0.25"/><line x1="677.83" y1="326.4" x2="677.83" y2="372.6" stroke="#e6e6e6" stroke-width="0.25"/><line x1="679.80" y1="326.4" x2="679.80" y2="372.6" stroke="#e6e6e6" stroke-width="0.25"/><line x1="681.77" y1="326.4" x2="681.77" y2="372.6" stroke="#e6e6e6" stroke-width="0.25"/><line x1="683.74" y1="326.4" x2="683.74" y2="372.6" stroke="#e6e6e6" stroke-width="0.25"/><line x1="685.71" y1="326.4" x2="685.71" y2="372.6" stroke="#e6e6e6" stroke-width="0.25"/><line x1="687.68" y1="326.4" x2="687.68" y2="372.6" stroke="#e6e6e6" stroke-width="0.25"/><line x1="689.65" y1="326.4" x2="689.65" y2="372.6" stroke="#e6e6e6" stroke-width="0.25"/><line x1="691.62" y1="326.4" x2="691.62" y2="372.6" stroke="#e6e6e6" stroke-width="0.25"/><line x1="693.59" y1="326.4" x2="693.59" y2="372.6" stroke="#e6e6e6" stroke-width="0.25"/><line x1="695.56" y1="326.4" x2="695.56" y2="372.6" stroke="#e6e6e6" stroke-width="0.25"/><line x1="697.53" y1="326.4" x2="697.53" y2="372.6" stroke="#e6e6e6" stroke-width="0.25"/><line x1="699.50" y1="326.4" x2="699.50" y2="372.6" stroke="#e6e6e6" stroke-width="0.25"/><line x1="701.47" y1="326.4" x2="701.47" y2="372.6" stroke="#e6e6e6" stroke-width="0.25"/><line x1="703.44" y1="326.4" x2="703.44" y2="372.6" stroke="#e6e6e6" stroke-width="0.25"/><line x1="705.41" y1="326.4" x2="705.41" y2="372.6" stroke="#e6e6e6" stroke-width="0.25"/><line x1="707.38" y1="326.4" x2="707.38" y2="372.6" stroke="#e6e6e6" stroke-width="0.25"/><line x1="709.35" y1="326.4" x2="709.35" y2="372.6" stroke="#e6e6e6" stroke-width="0.25"/><line x1="711.32" y1="326.4" x2="711.32" y2="372.6" stroke="#e6e6e6" stroke-width="0.25"/><line x1="713.29" y1="326.4" x2="713.29" y2="372.6" stroke="#e6e6e6" stroke-width="0.25"/><line x1="715.26" y1="326.4" x2="715.26" y2="372.6" stroke="#e6e6e6" stroke-width="0.25"/><line x1="717.23" y1="326.4" x2="717.23" y2="372.6" stroke="#e6e6e6" stroke-width="0.25"/><line x1="719.20" y1="326.4" x2="719.20" y2="372.6" stroke="#e6e6e6" stroke-width="0.25"/><line x1="721.17" y1="326.4" x2="721.17" y2="372.6" stroke="#e6e6e6" stroke-width="0.25"/><line x1="723.14" y1="326.4" x2="723.14" y2="372.6" stroke="#e6e6e6" stroke-width="0.25"/><line x1="725.11" y1="326.4" x2="725.11" y2="372.6" stroke="#e6e6e6" stroke-width="0.25"/><line x1="727.08" y1="326.4" x2="727.08" y2="372.6" stroke="#e6e6e6" stroke-width="0.25"/><line x1="729.05" y1="326.4" x2="729.05" y2="372.6" stroke="#e6e6e6" stroke-width="0.25"/><line x1="731.02" y1="326.4" x2="731.02" y2="372.6" stroke="#e6e6e6" stroke-width="0.25"/><line x1="732.99" y1="326.4" x2="732.99" y2="372.6" stroke="#e6e6e6" stroke-width="0.25"/><line x1="734.96" y1="326.4" x2="734.96" y2="372.6" stroke="#e6e6e6" stroke-width="0.25"/><line x1="736.93" y1="326.4" x2="736.93" y2="372.6" stroke="#e6e6e6" stroke-width="0.25"/><line x1="738.90" y1="326.4" x2="738.90" y2="372.6" stroke="#e6e6e6" stroke-width="0.25"/><line x1="740.87" y1="326.4" x2="740.87" y2="372.6" stroke="#e6e6e6" stroke-width="0.25"/><line x1="742.84" y1="326.4" x2="742.84" y2="372.6" stroke="#e6e6e6" stroke-width="0.25"/><line x1="744.81" y1="326.4" x2="744.81" y2="372.6" stroke="#e6e6e6" stroke-width="0.25"/><line x1="746.78" y1="326.4" x2="746.78" y2="372.6" stroke="#e6e6e6" stroke-width="0.25"/><line x1="748.75" y1="326.4" x2="748.75" y2="372.6" stroke="#e6e6e6" stroke-width="0.25"/><line x1="750.72" y1="326.4" x2="750.72" y2="372.6" stroke="#e6e6e6" stroke-width="0.25"/><line x1="752.69" y1="326.4" x2="752.69" y2="372.6" stroke="#e6e6e6" stroke-width="0.25"/><line x1="754.66" y1="326.4" x2="754.66" y2="372.6" stroke="#e6e6e6" stroke-width="0.25"/><line x1="756.63" y1="326.4" x2="756.63" y2="372.6" stroke="#e6e6e6" stroke-width="0.25"/><line x1="758.60" y1="326.4" x2="758.60" y2="372.6" stroke="#e6e6e6" stroke-width="0.25"/><line x1="760.57" y1="326.4" x2="760.57" y2="372.6" stroke="#e6e6e6" stroke-width="0.25"/><line x1="762.54" y1="326.4" x2="762.54" y2="372.6" stroke="#e6e6e6" stroke-width="0.25"/><line x1="764.51" y1="326.4" x2="764.51" y2="372.6" stroke="#e6e6e6" stroke-width="0.25"/><line x1="766.48" y1="326.4" x2="766.48" y2="372.6" stroke="#e6e6e6" stroke-width="0.25"/><line x1="768.45" y1="326.4" x2="768.45" y2="372.6" stroke="#e6e6e6" stroke-width="0.25"/><line x1="770.42" y1="326.4" x2="770.42" y2="372.6" stroke="#e6e6e6" stroke-width="0.25"/><line x1="772.39" y1="326.4" x2="772.39" y2="372.6" stroke="#e6e6e6" stroke-width="0.25"/><line x1="774.36" y1="326.4" x2="774.36" y2="372.6" stroke="#e6e6e6" stroke-width="0.25"/><line x1="776.33" y1="326.4" x2="776.33" y2="372.6" stroke="#e6e6e6" stroke-width="0.25"/><line x1="778.30" y1="326.4" x2="778.30" y2="372.6" stroke="#e6e6e6" stroke-width="0.25"/><line x1="780.27" y1="326.4" x2="780.27" y2="372.6" stroke="#e6e6e6" stroke-width="0.25"/><line x1="782.24" y1="326.4" x2="782.24" y2="372.6" stroke="#e6e6e6" stroke-width="0.25"/><line x1="784.21" y1="326.4" x2="784.21" y2="372.6" stroke="#e6e6e6" stroke-width="0.25"/><line x1="786.18" y1="326.4" x2="786.18" y2="372.6" stroke="#e6e6e6" stroke-width="0.25"/><line x1="788.15" y1="326.4" x2="788.15" y2="372.6" stroke="#e6e6e6" stroke-width="0.25"/><line x1="790.12" y1="326.4" x2="790.12" y2="372.6" stroke="#e6e6e6" stroke-width="0.25"/><line x1="792.09" y1="326.4" x2="792.09" y2="372.6" stroke="#e6e6e6" stroke-width="0.25"/><line x1="794.06" y1="326.4" x2="794.06" y2="372.6" stroke="#e6e6e6" stroke-width="0.25"/><line x1="796.03" y1="326.4" x2="796.03" y2="372.6" stroke="#e6e6e6" stroke-width="0.25"/><line x1="798.00" y1="326.4" x2="798.00" y2="372.6" stroke="#e6e6e6" stroke-width="0.25"/><line x1="799.97" y1="326.4" x2="799.97" y2="372.6" stroke="#e6e6e6" stroke-width="0.25"/><line x1="801.94" y1="326.4" x2="801.94" y2="372.6" stroke="#e6e6e6" stroke-width="0.25"/><line x1="803.91" y1="326.4" x2="803.91" y2="372.6" stroke="#e6e6e6" stroke-width="0.25"/><line x1="805.88" y1="326.4" x2="805.88" y2="372.6" stroke="#e6e6e6" stroke-width="0.25"/><line x1="807.85" y1="326.4" x2="807.85" y2="372.6" stroke="#e6e6e6" stroke-width="0.25"/><line x1="809.82" y1="326.4" x2="809.82" y2="372.6" stroke="#e6e6e6" stroke-width="0.25"/><line x1="811.79" y1="326.4" x2="811.79" y2="372.6" stroke="#e6e6e6" stroke-width="0.25"/><line x1="813.76" y1="326.4" x2="813.76" y2="372.6" stroke="#e6e6e6" stroke-width="0.25"/><line x1="815.73" y1="326.4" x2="815.73" y2="372.6" stroke="#e6e6e6" stroke-width="0.25"/><line x1="817.70" y1="326.4" x2="817.70" y2="372.6" stroke="#e6e6e6" stroke-width="0.25"/><line x1="819.67" y1="326.4" x2="819.67" y2="372.6" stroke="#e6e6e6" stroke-width="0.25"/><line x1="821.64" y1="326.4" x2="821.64" y2="372.6" stroke="#e6e6e6" stroke-width="0.25"/><line x1="823.61" y1="326.4" x2="823.61" y2="372.6" stroke="#e6e6e6" stroke-width="0.25"/><line x1="825.58" y1="326.4" x2="825.58" y2="372.6" stroke="#e6e6e6" stroke-width="0.25"/><line x1="827.55" y1="326.4" x2="827.55" y2="372.6" stroke="#e6e6e6" stroke-width="0.25"/><line x1="829.52" y1="326.4" x2="829.52" y2="372.6" stroke="#e6e6e6" stroke-width="0.25"/><line x1="831.49" y1="326.4" x2="831.49" y2="372.6" stroke="#e6e6e6" stroke-width="0.25"/><line x1="833.46" y1="326.4" x2="833.46" y2="372.6" stroke="#e6e6e6" stroke-width="0.25"/><line x1="835.43" y1="326.4" x2="835.43" y2="372.6" stroke="#e6e6e6" stroke-width="0.25"/><line x1="837.40" y1="326.4" x2="837.40" y2="372.6" stroke="#e6e6e6" stroke-width="0.25"/><line x1="839.37" y1="326.4" x2="839.37" y2="372.6" stroke="#e6e6e6" stroke-width="0.25"/><line x1="841.34" y1="326.4" x2="841.34" y2="372.6" stroke="#e6e6e6" stroke-width="0.25"/><line x1="843.31" y1="326.4" x2="843.31" y2="372.6" stroke="#e6e6e6" stroke-width="0.25"/><line x1="845.28" y1="326.4" x2="845.28" y2="372.6" stroke="#e6e6e6" stroke-width="0.25"/><line x1="847.25" y1="326.4" x2="847.25" y2="372.6" stroke="#e6e6e6" stroke-width="0.25"/><line x1="849.22" y1="326.4" x2="849.22" y2="372.6" stroke="#e6e6e6" stroke-width="0.25"/><line x1="851.19" y1="326.4" x2="851.19" y2="372.6" stroke="#e6e6e6" stroke-width="0.25"/><line x1="853.16" y1="326.4" x2="853.16" y2="372.6" stroke="#e6e6e6" stroke-width="0.25"/><line x1="855.13" y1="326.4" x2="855.13" y2="372.6" stroke="#e6e6e6" stroke-width="0.25"/><line x1="611.1" y1="326.4" x2="611.1" y2="372.6" stroke="#222" stroke-width="0.8"/><line x1="630.8" y1="326.4" x2="630.8" y2="372.6" stroke="#222" stroke-width="0.8"/><line x1="650.5" y1="326.4" x2="650.5" y2="372.6" stroke="#222" stroke-width="0.8"/><line x1="670.2" y1="326.4" x2="670.2" y2="372.6" stroke="#222" stroke-width="0.8"/><line x1="689.9" y1="326.4" x2="689.9" y2="372.6" stroke="#222" stroke-width="0.8"/><line x1="709.6" y1="326.4" x2="709.6" y2="372.6" stroke="#222" stroke-width="0.8"/><line x1="729.3" y1="326.4" x2="729.3" y2="372.6" stroke="#222" stroke-width="0.8"/><line x1="749.0" y1="326.4" x2="749.0" y2="372.6" stroke="#222" stroke-width="0.8"/><line x1="768.7" y1="326.4" x2="768.7" y2="372.6" stroke="#222" stroke-width="0.8"/><line x1="788.4" y1="326.4" x2="788.4" y2="372.6" stroke="#222" stroke-width="0.8"/><line x1="808.1" y1="326.4" x2="808.1" y2="372.6" stroke="#222" stroke-width="0.8"/><line x1="827.8" y1="326.4" x2="827.8" y2="372.6" stroke="#222" stroke-width="0.8"/><line x1="847.5" y1="326.4" x2="847.5" y2="372.6" stroke="#222" stroke-width="0.8"/><line x1="601.6" y1="332" x2="855.6" y2="332" stroke="#5c8a5c" stroke-width="1.1" stroke-dasharray="1.3 0.65"/><rect x="651" y="330.6" width="5" height="2.2" fill="#f5f5f5"/><rect x="652.5" y="329.3" width="3" height="0.9" fill="#5c8a5c"/><rect x="690.5" y="330.6" width="5" height="2.2" fill="#f5f5f5"/><rect x="692.0" y="329.3" width="3" height="0.9" fill="#5c8a5c"/><rect x="812" y="330.6" width="5" height="2.2" fill="#f5f5f5"/><rect x="813.5" y="329.3" width="3" height="0.9" fill="#5c8a5c"/><rect x="618" y="334.2" width="1.2" height="1.2" fill="#4a7a4a"/><rect x="631" y="334.2" width="1.2" height="1.2" fill="#4a7a4a"/><rect x="671.4" y="334.2" width="1.2" height="1.2" fill="#4a7a4a"/><rect x="719" y="334.2" width="1.2" height="1.2" fill="#4a7a4a"/><rect x="824.2" y="339" width="1.8" height="2.4" fill="#e01818"/><rect x="601.0" y="377.4" width="254.60000000000002" height="45.10000000000002" fill="#fff"/><rect x="601.0" y="377.4" width="253.0" height="45.10000000000002" fill="#1a1ae4"/><line x1="602.97" y1="377.4" x2="602.97" y2="422.5" stroke="#0a0aa8" stroke-width="0.35" opacity="0.7"/><line x1="604.94" y1="377.4" x2="604.94" y2="422.5" stroke="#0a0aa8" stroke-width="0.35" opacity="0.7"/><line x1="606.91" y1="377.4" x2="606.91" y2="422.5" stroke="#0a0aa8" stroke-width="0.35" opacity="0.7"/><line x1="608.88" y1="377.4" x2="608.88" y2="422.5" stroke="#0a0aa8" stroke-width="0.35" opacity="0.7"/><line x1="610.85" y1="377.4" x2="610.85" y2="422.5" stroke="#0a0aa8" stroke-width="0.35" opacity="0.7"/><line x1="612.82" y1="377.4" x2="612.82" y2="422.5" stroke="#0a0aa8" stroke-width="0.35" opacity="0.7"/><line x1="614.79" y1="377.4" x2="614.79" y2="422.5" stroke="#0a0aa8" stroke-width="0.35" opacity="0.7"/><line x1="616.76" y1="377.4" x2="616.76" y2="422.5" stroke="#0a0aa8" stroke-width="0.35" opacity="0.7"/><line x1="618.73" y1="377.4" x2="618.73" y2="422.5" stroke="#0a0aa8" stroke-width="0.35" opacity="0.7"/><line x1="620.70" y1="377.4" x2="620.70" y2="422.5" stroke="#0a0aa8" stroke-width="0.35" opacity="0.7"/><line x1="622.67" y1="377.4" x2="622.67" y2="422.5" stroke="#0a0aa8" stroke-width="0.35" opacity="0.7"/><line x1="624.64" y1="377.4" x2="624.64" y2="422.5" stroke="#0a0aa8" stroke-width="0.35" opacity="0.7"/><line x1="626.61" y1="377.4" x2="626.61" y2="422.5" stroke="#0a0aa8" stroke-width="0.35" opacity="0.7"/><line x1="628.58" y1="377.4" x2="628.58" y2="422.5" stroke="#0a0aa8" stroke-width="0.35" opacity="0.7"/><line x1="630.55" y1="377.4" x2="630.55" y2="422.5" stroke="#0a0aa8" stroke-width="0.35" opacity="0.7"/><line x1="632.52" y1="377.4" x2="632.52" y2="422.5" stroke="#0a0aa8" stroke-width="0.35" opacity="0.7"/><line x1="634.49" y1="377.4" x2="634.49" y2="422.5" stroke="#0a0aa8" stroke-width="0.35" opacity="0.7"/><line x1="636.46" y1="377.4" x2="636.46" y2="422.5" stroke="#0a0aa8" stroke-width="0.35" opacity="0.7"/><line x1="638.43" y1="377.4" x2="638.43" y2="422.5" stroke="#0a0aa8" stroke-width="0.35" opacity="0.7"/><line x1="640.40" y1="377.4" x2="640.40" y2="422.5" stroke="#0a0aa8" stroke-width="0.35" opacity="0.7"/><line x1="642.37" y1="377.4" x2="642.37" y2="422.5" stroke="#0a0aa8" stroke-width="0.35" opacity="0.7"/><line x1="644.34" y1="377.4" x2="644.34" y2="422.5" stroke="#0a0aa8" stroke-width="0.35" opacity="0.7"/><line x1="646.31" y1="377.4" x2="646.31" y2="422.5" stroke="#0a0aa8" stroke-width="0.35" opacity="0.7"/><line x1="648.28" y1="377.4" x2="648.28" y2="422.5" stroke="#0a0aa8" stroke-width="0.35" opacity="0.7"/><line x1="650.25" y1="377.4" x2="650.25" y2="422.5" stroke="#0a0aa8" stroke-width="0.35" opacity="0.7"/><line x1="652.22" y1="377.4" x2="652.22" y2="422.5" stroke="#0a0aa8" stroke-width="0.35" opacity="0.7"/><line x1="654.19" y1="377.4" x2="654.19" y2="422.5" stroke="#0a0aa8" stroke-width="0.35" opacity="0.7"/><line x1="656.16" y1="377.4" x2="656.16" y2="422.5" stroke="#0a0aa8" stroke-width="0.35" opacity="0.7"/><line x1="658.13" y1="377.4" x2="658.13" y2="422.5" stroke="#0a0aa8" stroke-width="0.35" opacity="0.7"/><line x1="660.10" y1="377.4" x2="660.10" y2="422.5" stroke="#0a0aa8" stroke-width="0.35" opacity="0.7"/><line x1="662.07" y1="377.4" x2="662.07" y2="422.5" stroke="#0a0aa8" stroke-width="0.35" opacity="0.7"/><line x1="664.04" y1="377.4" x2="664.04" y2="422.5" stroke="#0a0aa8" stroke-width="0.35" opacity="0.7"/><line x1="666.01" y1="377.4" x2="666.01" y2="422.5" stroke="#0a0aa8" stroke-width="0.35" opacity="0.7"/><line x1="667.98" y1="377.4" x2="667.98" y2="422.5" stroke="#0a0aa8" stroke-width="0.35" opacity="0.7"/><line x1="669.95" y1="377.4" x2="669.95" y2="422.5" stroke="#0a0aa8" stroke-width="0.35" opacity="0.7"/><line x1="671.92" y1="377.4" x2="671.92" y2="422.5" stroke="#0a0aa8" stroke-width="0.35" opacity="0.7"/><line x1="673.89" y1="377.4" x2="673.89" y2="422.5" stroke="#0a0aa8" stroke-width="0.35" opacity="0.7"/><line x1="675.86" y1="377.4" x2="675.86" y2="422.5" stroke="#0a0aa8" stroke-width="0.35" opacity="0.7"/><line x1="677.83" y1="377.4" x2="677.83" y2="422.5" stroke="#0a0aa8" stroke-width="0.35" opacity="0.7"/><line x1="679.80" y1="377.4" x2="679.80" y2="422.5" stroke="#0a0aa8" stroke-width="0.35" opacity="0.7"/><line x1="681.77" y1="377.4" x2="681.77" y2="422.5" stroke="#0a0aa8" stroke-width="0.35" opacity="0.7"/><line x1="683.74" y1="377.4" x2="683.74" y2="422.5" stroke="#0a0aa8" stroke-width="0.35" opacity="0.7"/><line x1="685.71" y1="377.4" x2="685.71" y2="422.5" stroke="#0a0aa8" stroke-width="0.35" opacity="0.7"/><line x1="687.68" y1="377.4" x2="687.68" y2="422.5" stroke="#0a0aa8" stroke-width="0.35" opacity="0.7"/><line x1="689.65" y1="377.4" x2="689.65" y2="422.5" stroke="#0a0aa8" stroke-width="0.35" opacity="0.7"/><line x1="691.62" y1="377.4" x2="691.62" y2="422.5" stroke="#0a0aa8" stroke-width="0.35" opacity="0.7"/><line x1="693.59" y1="377.4" x2="693.59" y2="422.5" stroke="#0a0aa8" stroke-width="0.35" opacity="0.7"/><line x1="695.56" y1="377.4" x2="695.56" y2="422.5" stroke="#0a0aa8" stroke-width="0.35" opacity="0.7"/><line x1="697.53" y1="377.4" x2="697.53" y2="422.5" stroke="#0a0aa8" stroke-width="0.35" opacity="0.7"/><line x1="699.50" y1="377.4" x2="699.50" y2="422.5" stroke="#0a0aa8" stroke-width="0.35" opacity="0.7"/><line x1="701.47" y1="377.4" x2="701.47" y2="422.5" stroke="#0a0aa8" stroke-width="0.35" opacity="0.7"/><line x1="703.44" y1="377.4" x2="703.44" y2="422.5" stroke="#0a0aa8" stroke-width="0.35" opacity="0.7"/><line x1="705.41" y1="377.4" x2="705.41" y2="422.5" stroke="#0a0aa8" stroke-width="0.35" opacity="0.7"/><line x1="707.38" y1="377.4" x2="707.38" y2="422.5" stroke="#0a0aa8" stroke-width="0.35" opacity="0.7"/><line x1="709.35" y1="377.4" x2="709.35" y2="422.5" stroke="#0a0aa8" stroke-width="0.35" opacity="0.7"/><line x1="711.32" y1="377.4" x2="711.32" y2="422.5" stroke="#0a0aa8" stroke-width="0.35" opacity="0.7"/><line x1="713.29" y1="377.4" x2="713.29" y2="422.5" stroke="#0a0aa8" stroke-width="0.35" opacity="0.7"/><line x1="715.26" y1="377.4" x2="715.26" y2="422.5" stroke="#0a0aa8" stroke-width="0.35" opacity="0.7"/><line x1="717.23" y1="377.4" x2="717.23" y2="422.5" stroke="#0a0aa8" stroke-width="0.35" opacity="0.7"/><line x1="719.20" y1="377.4" x2="719.20" y2="422.5" stroke="#0a0aa8" stroke-width="0.35" opacity="0.7"/><line x1="721.17" y1="377.4" x2="721.17" y2="422.5" stroke="#0a0aa8" stroke-width="0.35" opacity="0.7"/><line x1="723.14" y1="377.4" x2="723.14" y2="422.5" stroke="#0a0aa8" stroke-width="0.35" opacity="0.7"/><line x1="725.11" y1="377.4" x2="725.11" y2="422.5" stroke="#0a0aa8" stroke-width="0.35" opacity="0.7"/><line x1="727.08" y1="377.4" x2="727.08" y2="422.5" stroke="#0a0aa8" stroke-width="0.35" opacity="0.7"/><line x1="729.05" y1="377.4" x2="729.05" y2="422.5" stroke="#0a0aa8" stroke-width="0.35" opacity="0.7"/><line x1="731.02" y1="377.4" x2="731.02" y2="422.5" stroke="#0a0aa8" stroke-width="0.35" opacity="0.7"/><line x1="732.99" y1="377.4" x2="732.99" y2="422.5" stroke="#0a0aa8" stroke-width="0.35" opacity="0.7"/><line x1="734.96" y1="377.4" x2="734.96" y2="422.5" stroke="#0a0aa8" stroke-width="0.35" opacity="0.7"/><line x1="736.93" y1="377.4" x2="736.93" y2="422.5" stroke="#0a0aa8" stroke-width="0.35" opacity="0.7"/><line x1="738.90" y1="377.4" x2="738.90" y2="422.5" stroke="#0a0aa8" stroke-width="0.35" opacity="0.7"/><line x1="740.87" y1="377.4" x2="740.87" y2="422.5" stroke="#0a0aa8" stroke-width="0.35" opacity="0.7"/><line x1="742.84" y1="377.4" x2="742.84" y2="422.5" stroke="#0a0aa8" stroke-width="0.35" opacity="0.7"/><line x1="744.81" y1="377.4" x2="744.81" y2="422.5" stroke="#0a0aa8" stroke-width="0.35" opacity="0.7"/><line x1="746.78" y1="377.4" x2="746.78" y2="422.5" stroke="#0a0aa8" stroke-width="0.35" opacity="0.7"/><line x1="748.75" y1="377.4" x2="748.75" y2="422.5" stroke="#0a0aa8" stroke-width="0.35" opacity="0.7"/><line x1="750.72" y1="377.4" x2="750.72" y2="422.5" stroke="#0a0aa8" stroke-width="0.35" opacity="0.7"/><line x1="752.69" y1="377.4" x2="752.69" y2="422.5" stroke="#0a0aa8" stroke-width="0.35" opacity="0.7"/><line x1="754.66" y1="377.4" x2="754.66" y2="422.5" stroke="#0a0aa8" stroke-width="0.35" opacity="0.7"/><line x1="756.63" y1="377.4" x2="756.63" y2="422.5" stroke="#0a0aa8" stroke-width="0.35" opacity="0.7"/><line x1="758.60" y1="377.4" x2="758.60" y2="422.5" stroke="#0a0aa8" stroke-width="0.35" opacity="0.7"/><line x1="760.57" y1="377.4" x2="760.57" y2="422.5" stroke="#0a0aa8" stroke-width="0.35" opacity="0.7"/><line x1="762.54" y1="377.4" x2="762.54" y2="422.5" stroke="#0a0aa8" stroke-width="0.35" opacity="0.7"/><line x1="764.51" y1="377.4" x2="764.51" y2="422.5" stroke="#0a0aa8" stroke-width="0.35" opacity="0.7"/><line x1="766.48" y1="377.4" x2="766.48" y2="422.5" stroke="#0a0aa8" stroke-width="0.35" opacity="0.7"/><line x1="768.45" y1="377.4" x2="768.45" y2="422.5" stroke="#0a0aa8" stroke-width="0.35" opacity="0.7"/><line x1="770.42" y1="377.4" x2="770.42" y2="422.5" stroke="#0a0aa8" stroke-width="0.35" opacity="0.7"/><line x1="772.39" y1="377.4" x2="772.39" y2="422.5" stroke="#0a0aa8" stroke-width="0.35" opacity="0.7"/><line x1="774.36" y1="377.4" x2="774.36" y2="422.5" stroke="#0a0aa8" stroke-width="0.35" opacity="0.7"/><line x1="776.33" y1="377.4" x2="776.33" y2="422.5" stroke="#0a0aa8" stroke-width="0.35" opacity="0.7"/><line x1="778.30" y1="377.4" x2="778.30" y2="422.5" stroke="#0a0aa8" stroke-width="0.35" opacity="0.7"/><line x1="780.27" y1="377.4" x2="780.27" y2="422.5" stroke="#0a0aa8" stroke-width="0.35" opacity="0.7"/><line x1="782.24" y1="377.4" x2="782.24" y2="422.5" stroke="#0a0aa8" stroke-width="0.35" opacity="0.7"/><line x1="784.21" y1="377.4" x2="784.21" y2="422.5" stroke="#0a0aa8" stroke-width="0.35" opacity="0.7"/><line x1="786.18" y1="377.4" x2="786.18" y2="422.5" stroke="#0a0aa8" stroke-width="0.35" opacity="0.7"/><line x1="788.15" y1="377.4" x2="788.15" y2="422.5" stroke="#0a0aa8" stroke-width="0.35" opacity="0.7"/><line x1="790.12" y1="377.4" x2="790.12" y2="422.5" stroke="#0a0aa8" stroke-width="0.35" opacity="0.7"/><line x1="792.09" y1="377.4" x2="792.09" y2="422.5" stroke="#0a0aa8" stroke-width="0.35" opacity="0.7"/><line x1="794.06" y1="377.4" x2="794.06" y2="422.5" stroke="#0a0aa8" stroke-width="0.35" opacity="0.7"/><line x1="796.03" y1="377.4" x2="796.03" y2="422.5" stroke="#0a0aa8" stroke-width="0.35" opacity="0.7"/><line x1="798.00" y1="377.4" x2="798.00" y2="422.5" stroke="#0a0aa8" stroke-width="0.35" opacity="0.7"/><line x1="799.97" y1="377.4" x2="799.97" y2="422.5" stroke="#0a0aa8" stroke-width="0.35" opacity="0.7"/><line x1="801.94" y1="377.4" x2="801.94" y2="422.5" stroke="#0a0aa8" stroke-width="0.35" opacity="0.7"/><line x1="803.91" y1="377.4" x2="803.91" y2="422.5" stroke="#0a0aa8" stroke-width="0.35" opacity="0.7"/><line x1="805.88" y1="377.4" x2="805.88" y2="422.5" stroke="#0a0aa8" stroke-width="0.35" opacity="0.7"/><line x1="807.85" y1="377.4" x2="807.85" y2="422.5" stroke="#0a0aa8" stroke-width="0.35" opacity="0.7"/><line x1="809.82" y1="377.4" x2="809.82" y2="422.5" stroke="#0a0aa8" stroke-width="0.35" opacity="0.7"/><line x1="811.79" y1="377.4" x2="811.79" y2="422.5" stroke="#0a0aa8" stroke-width="0.35" opacity="0.7"/><line x1="813.76" y1="377.4" x2="813.76" y2="422.5" stroke="#0a0aa8" stroke-width="0.35" opacity="0.7"/><line x1="815.73" y1="377.4" x2="815.73" y2="422.5" stroke="#0a0aa8" stroke-width="0.35" opacity="0.7"/><line x1="817.70" y1="377.4" x2="817.70" y2="422.5" stroke="#0a0aa8" stroke-width="0.35" opacity="0.7"/><line x1="819.67" y1="377.4" x2="819.67" y2="422.5" stroke="#0a0aa8" stroke-width="0.35" opacity="0.7"/><line x1="821.64" y1="377.4" x2="821.64" y2="422.5" stroke="#0a0aa8" stroke-width="0.35" opacity="0.7"/><line x1="823.61" y1="377.4" x2="823.61" y2="422.5" stroke="#0a0aa8" stroke-width="0.35" opacity="0.7"/><line x1="825.58" y1="377.4" x2="825.58" y2="422.5" stroke="#0a0aa8" stroke-width="0.35" opacity="0.7"/><line x1="827.55" y1="377.4" x2="827.55" y2="422.5" stroke="#0a0aa8" stroke-width="0.35" opacity="0.7"/><line x1="829.52" y1="377.4" x2="829.52" y2="422.5" stroke="#0a0aa8" stroke-width="0.35" opacity="0.7"/><line x1="831.49" y1="377.4" x2="831.49" y2="422.5" stroke="#0a0aa8" stroke-width="0.35" opacity="0.7"/><line x1="833.46" y1="377.4" x2="833.46" y2="422.5" stroke="#0a0aa8" stroke-width="0.35" opacity="0.7"/><line x1="835.43" y1="377.4" x2="835.43" y2="422.5" stroke="#0a0aa8" stroke-width="0.35" opacity="0.7"/><line x1="837.40" y1="377.4" x2="837.40" y2="422.5" stroke="#0a0aa8" stroke-width="0.35" opacity="0.7"/><line x1="839.37" y1="377.4" x2="839.37" y2="422.5" stroke="#0a0aa8" stroke-width="0.35" opacity="0.7"/><line x1="841.34" y1="377.4" x2="841.34" y2="422.5" stroke="#0a0aa8" stroke-width="0.35" opacity="0.7"/><line x1="843.31" y1="377.4" x2="843.31" y2="422.5" stroke="#0a0aa8" stroke-width="0.35" opacity="0.7"/><line x1="845.28" y1="377.4" x2="845.28" y2="422.5" stroke="#0a0aa8" stroke-width="0.35" opacity="0.7"/><line x1="847.25" y1="377.4" x2="847.25" y2="422.5" stroke="#0a0aa8" stroke-width="0.35" opacity="0.7"/><line x1="849.22" y1="377.4" x2="849.22" y2="422.5" stroke="#0a0aa8" stroke-width="0.35" opacity="0.7"/><line x1="851.19" y1="377.4" x2="851.19" y2="422.5" stroke="#0a0aa8" stroke-width="0.35" opacity="0.7"/><line x1="853.16" y1="377.4" x2="853.16" y2="422.5" stroke="#0a0aa8" stroke-width="0.35" opacity="0.7"/><line x1="601.0" y1="383.20" x2="854" y2="383.20" stroke="#8a8a9a" stroke-width="0.5" opacity="0.75"/><line x1="601.0" y1="389.13" x2="854" y2="389.13" stroke="#8a8a9a" stroke-width="0.5" opacity="0.75"/><line x1="601.0" y1="395.06" x2="854" y2="395.06" stroke="#8a8a9a" stroke-width="0.5" opacity="0.75"/><line x1="601.0" y1="400.99" x2="854" y2="400.99" stroke="#8a8a9a" stroke-width="0.5" opacity="0.75"/><line x1="601.0" y1="406.92" x2="854" y2="406.92" stroke="#8a8a9a" stroke-width="0.5" opacity="0.75"/><line x1="601.0" y1="412.85" x2="854" y2="412.85" stroke="#8a8a9a" stroke-width="0.5" opacity="0.75"/><line x1="601.0" y1="418.78" x2="854" y2="418.78" stroke="#8a8a9a" stroke-width="0.5" opacity="0.75"/><rect x="603.06" y="377.4" width="4.03" height="29.54" fill="#fff"/><rect x="608.95" y="377.4" width="2.01" height="45.10" fill="#fff"/><rect x="621.04" y="377.4" width="1.86" height="45.10" fill="#fff"/><rect x="630.65" y="377.4" width="2.32" height="29.54" fill="#fff"/><rect x="634.99" y="377.4" width="3.72" height="45.10" fill="#fff"/><rect x="638.71" y="377.4" width="2.01" height="18.04" fill="#fff"/><rect x="642.74" y="377.4" width="5.73" height="45.10" fill="#fff"/><rect x="662.42" y="377.4" width="3.87" height="45.10" fill="#fff"/><rect x="670.48" y="377.4" width="1.55" height="10.82" fill="#fff"/><rect x="672.03" y="377.4" width="3.56" height="45.10" fill="#fff"/><rect x="679.93" y="377.4" width="3.87" height="45.10" fill="#fff"/><rect x="689.85" y="377.4" width="2.48" height="10.82" fill="#fff"/><rect x="696.05" y="377.4" width="1.55" height="45.10" fill="#fff"/><rect x="699.77" y="377.4" width="3.72" height="29.54" fill="#fff"/><rect x="703.49" y="377.4" width="1.86" height="45.10" fill="#fff"/><rect x="710.00" y="377.4" width="1.55" height="45.10" fill="#fff"/><rect x="718.22" y="377.4" width="2.63" height="18.04" fill="#fff"/><rect x="720.85" y="377.4" width="2.48" height="29.54" fill="#fff"/><rect x="726.24" y="377.4" width="1.55" height="29.54" fill="#fff"/><rect x="729.34" y="377.4" width="1.86" height="29.54" fill="#fff"/><rect x="731.20" y="377.4" width="1.55" height="45.10" fill="#fff"/><rect x="735.07" y="377.4" width="2.01" height="45.10" fill="#fff"/><rect x="737.09" y="377.4" width="6.20" height="29.54" fill="#fff"/><rect x="745.15" y="377.4" width="1.86" height="29.54" fill="#fff"/><rect x="756.77" y="377.4" width="2.01" height="29.54" fill="#fff"/><rect x="762.97" y="377.4" width="2.01" height="45.10" fill="#fff"/><rect x="764.99" y="377.4" width="1.55" height="29.54" fill="#fff"/><rect x="768.71" y="377.4" width="2.01" height="29.54" fill="#fff"/><rect x="772.74" y="377.4" width="1.86" height="29.54" fill="#fff"/><rect x="778.94" y="377.4" width="1.86" height="45.10" fill="#fff"/><rect x="780.80" y="377.4" width="1.86" height="29.54" fill="#fff"/><rect x="784.67" y="377.4" width="2.01" height="29.54" fill="#fff"/><rect x="792.42" y="377.4" width="2.32" height="45.10" fill="#fff"/><rect x="796.61" y="377.4" width="2.01" height="29.54" fill="#fff"/><rect x="802.50" y="377.4" width="3.41" height="45.10" fill="#fff"/><rect x="814.12" y="377.4" width="5.73" height="5.41" fill="#fff"/><rect x="817.22" y="377.4" width="1.55" height="29.54" fill="#fff"/><rect x="822.33" y="377.4" width="1.86" height="45.10" fill="#fff"/><rect x="824.19" y="377.4" width="1.55" height="29.54" fill="#fff"/><rect x="825.74" y="377.4" width="1.86" height="45.10" fill="#fff"/><rect x="831.94" y="377.4" width="2.32" height="29.54" fill="#fff"/><rect x="834.27" y="377.4" width="1.55" height="45.10" fill="#fff"/><rect x="835.82" y="377.4" width="1.55" height="29.54" fill="#fff"/><rect x="840.00" y="377.4" width="5.58" height="29.54" fill="#fff"/><rect x="601.0" y="427.5" width="256.6" height="44.5" fill="#f5f5f5" stroke="#333" stroke-width="0.7"/><line x1="601.00" y1="427.5" x2="601.00" y2="472" stroke="#e6e6e6" stroke-width="0.25"/><line x1="602.97" y1="427.5" x2="602.97" y2="472" stroke="#e6e6e6" stroke-width="0.25"/><line x1="604.94" y1="427.5" x2="604.94" y2="472" stroke="#e6e6e6" stroke-width="0.25"/><line x1="606.91" y1="427.5" x2="606.91" y2="472" stroke="#e6e6e6" stroke-width="0.25"/><line x1="608.88" y1="427.5" x2="608.88" y2="472" stroke="#e6e6e6" stroke-width="0.25"/><line x1="610.85" y1="427.5" x2="610.85" y2="472" stroke="#e6e6e6" stroke-width="0.25"/><line x1="612.82" y1="427.5" x2="612.82" y2="472" stroke="#e6e6e6" stroke-width="0.25"/><line x1="614.79" y1="427.5" x2="614.79" y2="472" stroke="#e6e6e6" stroke-width="0.25"/><line x1="616.76" y1="427.5" x2="616.76" y2="472" stroke="#e6e6e6" stroke-width="0.25"/><line x1="618.73" y1="427.5" x2="618.73" y2="472" stroke="#e6e6e6" stroke-width="0.25"/><line x1="620.70" y1="427.5" x2="620.70" y2="472" stroke="#e6e6e6" stroke-width="0.25"/><line x1="622.67" y1="427.5" x2="622.67" y2="472" stroke="#e6e6e6" stroke-width="0.25"/><line x1="624.64" y1="427.5" x2="624.64" y2="472" stroke="#e6e6e6" stroke-width="0.25"/><line x1="626.61" y1="427.5" x2="626.61" y2="472" stroke="#e6e6e6" stroke-width="0.25"/><line x1="628.58" y1="427.5" x2="628.58" y2="472" stroke="#e6e6e6" stroke-width="0.25"/><line x1="630.55" y1="427.5" x2="630.55" y2="472" stroke="#e6e6e6" stroke-width="0.25"/><line x1="632.52" y1="427.5" x2="632.52" y2="472" stroke="#e6e6e6" stroke-width="0.25"/><line x1="634.49" y1="427.5" x2="634.49" y2="472" stroke="#e6e6e6" stroke-width="0.25"/><line x1="636.46" y1="427.5" x2="636.46" y2="472" stroke="#e6e6e6" stroke-width="0.25"/><line x1="638.43" y1="427.5" x2="638.43" y2="472" stroke="#e6e6e6" stroke-width="0.25"/><line x1="640.40" y1="427.5" x2="640.40" y2="472" stroke="#e6e6e6" stroke-width="0.25"/><line x1="642.37" y1="427.5" x2="642.37" y2="472" stroke="#e6e6e6" stroke-width="0.25"/><line x1="644.34" y1="427.5" x2="644.34" y2="472" stroke="#e6e6e6" stroke-width="0.25"/><line x1="646.31" y1="427.5" x2="646.31" y2="472" stroke="#e6e6e6" stroke-width="0.25"/><line x1="648.28" y1="427.5" x2="648.28" y2="472" stroke="#e6e6e6" stroke-width="0.25"/><line x1="650.25" y1="427.5" x2="650.25" y2="472" stroke="#e6e6e6" stroke-width="0.25"/><line x1="652.22" y1="427.5" x2="652.22" y2="472" stroke="#e6e6e6" stroke-width="0.25"/><line x1="654.19" y1="427.5" x2="654.19" y2="472" stroke="#e6e6e6" stroke-width="0.25"/><line x1="656.16" y1="427.5" x2="656.16" y2="472" stroke="#e6e6e6" stroke-width="0.25"/><line x1="658.13" y1="427.5" x2="658.13" y2="472" stroke="#e6e6e6" stroke-width="0.25"/><line x1="660.10" y1="427.5" x2="660.10" y2="472" stroke="#e6e6e6" stroke-width="0.25"/><line x1="662.07" y1="427.5" x2="662.07" y2="472" stroke="#e6e6e6" stroke-width="0.25"/><line x1="664.04" y1="427.5" x2="664.04" y2="472" stroke="#e6e6e6" stroke-width="0.25"/><line x1="666.01" y1="427.5" x2="666.01" y2="472" stroke="#e6e6e6" stroke-width="0.25"/><line x1="667.98" y1="427.5" x2="667.98" y2="472" stroke="#e6e6e6" stroke-width="0.25"/><line x1="669.95" y1="427.5" x2="669.95" y2="472" stroke="#e6e6e6" stroke-width="0.25"/><line x1="671.92" y1="427.5" x2="671.92" y2="472" stroke="#e6e6e6" stroke-width="0.25"/><line x1="673.89" y1="427.5" x2="673.89" y2="472" stroke="#e6e6e6" stroke-width="0.25"/><line x1="675.86" y1="427.5" x2="675.86" y2="472" stroke="#e6e6e6" stroke-width="0.25"/><line x1="677.83" y1="427.5" x2="677.83" y2="472" stroke="#e6e6e6" stroke-width="0.25"/><line x1="679.80" y1="427.5" x2="679.80" y2="472" stroke="#e6e6e6" stroke-width="0.25"/><line x1="681.77" y1="427.5" x2="681.77" y2="472" stroke="#e6e6e6" stroke-width="0.25"/><line x1="683.74" y1="427.5" x2="683.74" y2="472" stroke="#e6e6e6" stroke-width="0.25"/><line x1="685.71" y1="427.5" x2="685.71" y2="472" stroke="#e6e6e6" stroke-width="0.25"/><line x1="687.68" y1="427.5" x2="687.68" y2="472" stroke="#e6e6e6" stroke-width="0.25"/><line x1="689.65" y1="427.5" x2="689.65" y2="472" stroke="#e6e6e6" stroke-width="0.25"/><line x1="691.62" y1="427.5" x2="691.62" y2="472" stroke="#e6e6e6" stroke-width="0.25"/><line x1="693.59" y1="427.5" x2="693.59" y2="472" stroke="#e6e6e6" stroke-width="0.25"/><line x1="695.56" y1="427.5" x2="695.56" y2="472" stroke="#e6e6e6" stroke-width="0.25"/><line x1="697.53" y1="427.5" x2="697.53" y2="472" stroke="#e6e6e6" stroke-width="0.25"/><line x1="699.50" y1="427.5" x2="699.50" y2="472" stroke="#e6e6e6" stroke-width="0.25"/><line x1="701.47" y1="427.5" x2="701.47" y2="472" stroke="#e6e6e6" stroke-width="0.25"/><line x1="703.44" y1="427.5" x2="703.44" y2="472" stroke="#e6e6e6" stroke-width="0.25"/><line x1="705.41" y1="427.5" x2="705.41" y2="472" stroke="#e6e6e6" stroke-width="0.25"/><line x1="707.38" y1="427.5" x2="707.38" y2="472" stroke="#e6e6e6" stroke-width="0.25"/><line x1="709.35" y1="427.5" x2="709.35" y2="472" stroke="#e6e6e6" stroke-width="0.25"/><line x1="711.32" y1="427.5" x2="711.32" y2="472" stroke="#e6e6e6" stroke-width="0.25"/><line x1="713.29" y1="427.5" x2="713.29" y2="472" stroke="#e6e6e6" stroke-width="0.25"/><line x1="715.26" y1="427.5" x2="715.26" y2="472" stroke="#e6e6e6" stroke-width="0.25"/><line x1="717.23" y1="427.5" x2="717.23" y2="472" stroke="#e6e6e6" stroke-width="0.25"/><line x1="719.20" y1="427.5" x2="719.20" y2="472" stroke="#e6e6e6" stroke-width="0.25"/><line x1="721.17" y1="427.5" x2="721.17" y2="472" stroke="#e6e6e6" stroke-width="0.25"/><line x1="723.14" y1="427.5" x2="723.14" y2="472" stroke="#e6e6e6" stroke-width="0.25"/><line x1="725.11" y1="427.5" x2="725.11" y2="472" stroke="#e6e6e6" stroke-width="0.25"/><line x1="727.08" y1="427.5" x2="727.08" y2="472" stroke="#e6e6e6" stroke-width="0.25"/><line x1="729.05" y1="427.5" x2="729.05" y2="472" stroke="#e6e6e6" stroke-width="0.25"/><line x1="731.02" y1="427.5" x2="731.02" y2="472" stroke="#e6e6e6" stroke-width="0.25"/><line x1="732.99" y1="427.5" x2="732.99" y2="472" stroke="#e6e6e6" stroke-width="0.25"/><line x1="734.96" y1="427.5" x2="734.96" y2="472" stroke="#e6e6e6" stroke-width="0.25"/><line x1="736.93" y1="427.5" x2="736.93" y2="472" stroke="#e6e6e6" stroke-width="0.25"/><line x1="738.90" y1="427.5" x2="738.90" y2="472" stroke="#e6e6e6" stroke-width="0.25"/><line x1="740.87" y1="427.5" x2="740.87" y2="472" stroke="#e6e6e6" stroke-width="0.25"/><line x1="742.84" y1="427.5" x2="742.84" y2="472" stroke="#e6e6e6" stroke-width="0.25"/><line x1="744.81" y1="427.5" x2="744.81" y2="472" stroke="#e6e6e6" stroke-width="0.25"/><line x1="746.78" y1="427.5" x2="746.78" y2="472" stroke="#e6e6e6" stroke-width="0.25"/><line x1="748.75" y1="427.5" x2="748.75" y2="472" stroke="#e6e6e6" stroke-width="0.25"/><line x1="750.72" y1="427.5" x2="750.72" y2="472" stroke="#e6e6e6" stroke-width="0.25"/><line x1="752.69" y1="427.5" x2="752.69" y2="472" stroke="#e6e6e6" stroke-width="0.25"/><line x1="754.66" y1="427.5" x2="754.66" y2="472" stroke="#e6e6e6" stroke-width="0.25"/><line x1="756.63" y1="427.5" x2="756.63" y2="472" stroke="#e6e6e6" stroke-width="0.25"/><line x1="758.60" y1="427.5" x2="758.60" y2="472" stroke="#e6e6e6" stroke-width="0.25"/><line x1="760.57" y1="427.5" x2="760.57" y2="472" stroke="#e6e6e6" stroke-width="0.25"/><line x1="762.54" y1="427.5" x2="762.54" y2="472" stroke="#e6e6e6" stroke-width="0.25"/><line x1="764.51" y1="427.5" x2="764.51" y2="472" stroke="#e6e6e6" stroke-width="0.25"/><line x1="766.48" y1="427.5" x2="766.48" y2="472" stroke="#e6e6e6" stroke-width="0.25"/><line x1="768.45" y1="427.5" x2="768.45" y2="472" stroke="#e6e6e6" stroke-width="0.25"/><line x1="770.42" y1="427.5" x2="770.42" y2="472" stroke="#e6e6e6" stroke-width="0.25"/><line x1="772.39" y1="427.5" x2="772.39" y2="472" stroke="#e6e6e6" stroke-width="0.25"/><line x1="774.36" y1="427.5" x2="774.36" y2="472" stroke="#e6e6e6" stroke-width="0.25"/><line x1="776.33" y1="427.5" x2="776.33" y2="472" stroke="#e6e6e6" stroke-width="0.25"/><line x1="778.30" y1="427.5" x2="778.30" y2="472" stroke="#e6e6e6" stroke-width="0.25"/><line x1="780.27" y1="427.5" x2="780.27" y2="472" stroke="#e6e6e6" stroke-width="0.25"/><line x1="782.24" y1="427.5" x2="782.24" y2="472" stroke="#e6e6e6" stroke-width="0.25"/><line x1="784.21" y1="427.5" x2="784.21" y2="472" stroke="#e6e6e6" stroke-width="0.25"/><line x1="786.18" y1="427.5" x2="786.18" y2="472" stroke="#e6e6e6" stroke-width="0.25"/><line x1="788.15" y1="427.5" x2="788.15" y2="472" stroke="#e6e6e6" stroke-width="0.25"/><line x1="790.12" y1="427.5" x2="790.12" y2="472" stroke="#e6e6e6" stroke-width="0.25"/><line x1="792.09" y1="427.5" x2="792.09" y2="472" stroke="#e6e6e6" stroke-width="0.25"/><line x1="794.06" y1="427.5" x2="794.06" y2="472" stroke="#e6e6e6" stroke-width="0.25"/><line x1="796.03" y1="427.5" x2="796.03" y2="472" stroke="#e6e6e6" stroke-width="0.25"/><line x1="798.00" y1="427.5" x2="798.00" y2="472" stroke="#e6e6e6" stroke-width="0.25"/><line x1="799.97" y1="427.5" x2="799.97" y2="472" stroke="#e6e6e6" stroke-width="0.25"/><line x1="801.94" y1="427.5" x2="801.94" y2="472" stroke="#e6e6e6" stroke-width="0.25"/><line x1="803.91" y1="427.5" x2="803.91" y2="472" stroke="#e6e6e6" stroke-width="0.25"/><line x1="805.88" y1="427.5" x2="805.88" y2="472" stroke="#e6e6e6" stroke-width="0.25"/><line x1="807.85" y1="427.5" x2="807.85" y2="472" stroke="#e6e6e6" stroke-width="0.25"/><line x1="809.82" y1="427.5" x2="809.82" y2="472" stroke="#e6e6e6" stroke-width="0.25"/><line x1="811.79" y1="427.5" x2="811.79" y2="472" stroke="#e6e6e6" stroke-width="0.25"/><line x1="813.76" y1="427.5" x2="813.76" y2="472" stroke="#e6e6e6" stroke-width="0.25"/><line x1="815.73" y1="427.5" x2="815.73" y2="472" stroke="#e6e6e6" stroke-width="0.25"/><line x1="817.70" y1="427.5" x2="817.70" y2="472" stroke="#e6e6e6" stroke-width="0.25"/><line x1="819.67" y1="427.5" x2="819.67" y2="472" stroke="#e6e6e6" stroke-width="0.25"/><line x1="821.64" y1="427.5" x2="821.64" y2="472" stroke="#e6e6e6" stroke-width="0.25"/><line x1="823.61" y1="427.5" x2="823.61" y2="472" stroke="#e6e6e6" stroke-width="0.25"/><line x1="825.58" y1="427.5" x2="825.58" y2="472" stroke="#e6e6e6" stroke-width="0.25"/><line x1="827.55" y1="427.5" x2="827.55" y2="472" stroke="#e6e6e6" stroke-width="0.25"/><line x1="829.52" y1="427.5" x2="829.52" y2="472" stroke="#e6e6e6" stroke-width="0.25"/><line x1="831.49" y1="427.5" x2="831.49" y2="472" stroke="#e6e6e6" stroke-width="0.25"/><line x1="833.46" y1="427.5" x2="833.46" y2="472" stroke="#e6e6e6" stroke-width="0.25"/><line x1="835.43" y1="427.5" x2="835.43" y2="472" stroke="#e6e6e6" stroke-width="0.25"/><line x1="837.40" y1="427.5" x2="837.40" y2="472" stroke="#e6e6e6" stroke-width="0.25"/><line x1="839.37" y1="427.5" x2="839.37" y2="472" stroke="#e6e6e6" stroke-width="0.25"/><line x1="841.34" y1="427.5" x2="841.34" y2="472" stroke="#e6e6e6" stroke-width="0.25"/><line x1="843.31" y1="427.5" x2="843.31" y2="472" stroke="#e6e6e6" stroke-width="0.25"/><line x1="845.28" y1="427.5" x2="845.28" y2="472" stroke="#e6e6e6" stroke-width="0.25"/><line x1="847.25" y1="427.5" x2="847.25" y2="472" stroke="#e6e6e6" stroke-width="0.25"/><line x1="849.22" y1="427.5" x2="849.22" y2="472" stroke="#e6e6e6" stroke-width="0.25"/><line x1="851.19" y1="427.5" x2="851.19" y2="472" stroke="#e6e6e6" stroke-width="0.25"/><line x1="853.16" y1="427.5" x2="853.16" y2="472" stroke="#e6e6e6" stroke-width="0.25"/><line x1="855.13" y1="427.5" x2="855.13" y2="472" stroke="#e6e6e6" stroke-width="0.25"/><line x1="611.1" y1="427.5" x2="611.1" y2="472" stroke="#222" stroke-width="0.8"/><line x1="630.8" y1="427.5" x2="630.8" y2="472" stroke="#222" stroke-width="0.8"/><line x1="650.5" y1="427.5" x2="650.5" y2="472" stroke="#222" stroke-width="0.8"/><line x1="670.2" y1="427.5" x2="670.2" y2="472" stroke="#222" stroke-width="0.8"/><line x1="689.9" y1="427.5" x2="689.9" y2="472" stroke="#222" stroke-width="0.8"/><line x1="709.6" y1="427.5" x2="709.6" y2="472" stroke="#222" stroke-width="0.8"/><line x1="729.3" y1="427.5" x2="729.3" y2="472" stroke="#222" stroke-width="0.8"/><line x1="749.0" y1="427.5" x2="749.0" y2="472" stroke="#222" stroke-width="0.8"/><line x1="768.7" y1="427.5" x2="768.7" y2="472" stroke="#222" stroke-width="0.8"/><line x1="788.4" y1="427.5" x2="788.4" y2="472" stroke="#222" stroke-width="0.8"/><line x1="808.1" y1="427.5" x2="808.1" y2="472" stroke="#222" stroke-width="0.8"/><line x1="827.8" y1="427.5" x2="827.8" y2="472" stroke="#222" stroke-width="0.8"/><line x1="847.5" y1="427.5" x2="847.5" y2="472" stroke="#222" stroke-width="0.8"/></svg>
</div></body></html>
